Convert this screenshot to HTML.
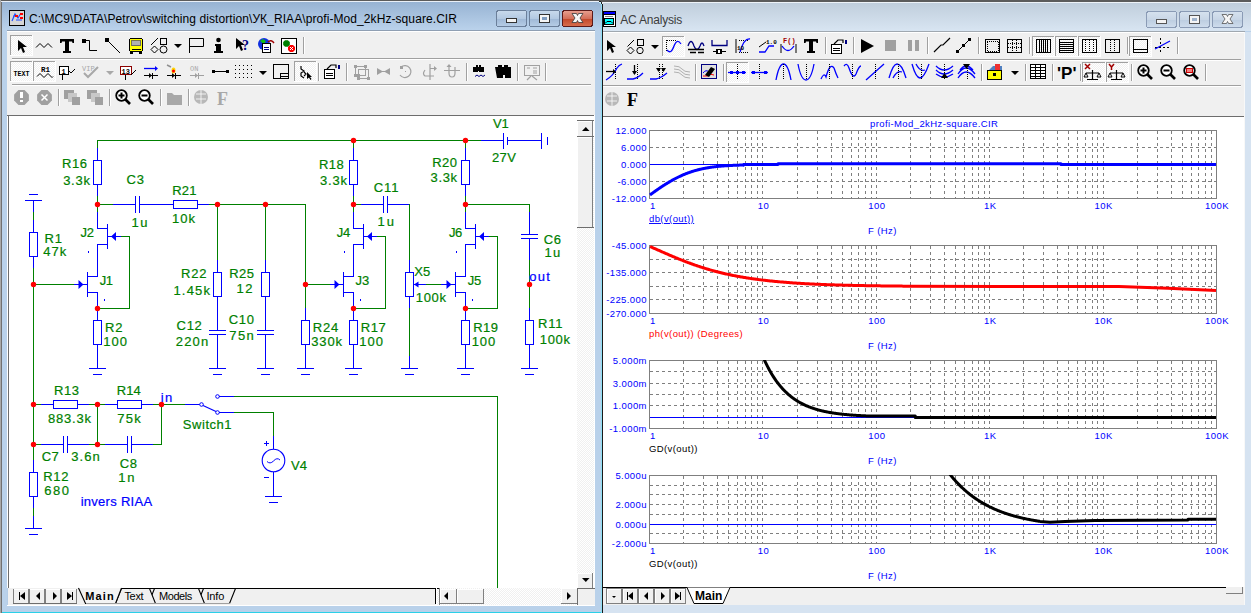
<!DOCTYPE html>
<html><head><meta charset="utf-8"><style>
html,body{margin:0;padding:0;width:1251px;height:613px;overflow:hidden;background:#fff}
svg{display:block}
svg{font-family:"Liberation Sans",sans-serif} rect{shape-rendering:crispEdges}
</style></head><body>
<svg width="1251" height="613" viewBox="0 0 1251 613">
<rect x="0" y="0" width="1251" height="613" fill="#b9d1ea"/>
<defs><linearGradient id="tact" x1="0" y1="0" x2="0" y2="1"><stop offset="0" stop-color="#97b3d3"/><stop offset="1" stop-color="#bad2eb"/></linearGradient><linearGradient id="tina" x1="0" y1="0" x2="0" y2="1"><stop offset="0" stop-color="#c0cedc"/><stop offset="1" stop-color="#d8e5f2"/></linearGradient><linearGradient id="fact" x1="0" y1="0" x2="0" y2="1"><stop offset="0" stop-color="#b9d1ea"/><stop offset="1" stop-color="#b9d1ea"/></linearGradient><linearGradient id="bclose" x1="0" y1="0" x2="0" y2="1"><stop offset="0" stop-color="#e8a192"/><stop offset="0.5" stop-color="#d46f5a"/><stop offset="0.52" stop-color="#c2472a"/><stop offset="1" stop-color="#d86f4f"/></linearGradient><linearGradient id="bact" x1="0" y1="0" x2="0" y2="1"><stop offset="0" stop-color="#c9daec"/><stop offset="0.5" stop-color="#b3c9e2"/><stop offset="0.52" stop-color="#9fb8d6"/><stop offset="1" stop-color="#b6cde6"/></linearGradient><linearGradient id="bina" x1="0" y1="0" x2="0" y2="1"><stop offset="0" stop-color="#d6e2ee"/><stop offset="0.5" stop-color="#c8d6e6"/><stop offset="0.52" stop-color="#bccde0"/><stop offset="1" stop-color="#cfdded"/></linearGradient><pattern id="dith" width="2" height="2" patternUnits="userSpaceOnUse"><rect width="2" height="2" fill="#f0f0f0"/><rect width="1" height="1" fill="#ffffff"/><rect x="1" y="1" width="1" height="1" fill="#ffffff"/></pattern></defs>
<rect x="0" y="0" width="602" height="613" fill="#b4cce6"/>
<rect x="0" y="0" width="1251" height="1" fill="#5c5c5c"/>
<rect x="0" y="0" width="1" height="613" fill="#6c6c6c"/>
<rect x="1" y="1" width="600" height="1" fill="#e9eff7"/>
<rect x="1" y="2" width="600" height="28" fill="url(#tact)"/>
<rect x="601" y="4" width="1" height="609" fill="#8fdff5"/>
<rect x="602" y="4" width="1" height="609" fill="#1a1a1a"/>
<rect x="603" y="0" width="648" height="2" fill="#5c5c5c"/>
<rect x="603" y="2" width="648" height="1" fill="#eef3f8"/>
<rect x="599" y="1" width="2" height="1" fill="#202020"/>
<rect x="601" y="2" width="1" height="2" fill="#202020"/>
<rect x="599" y="2" width="2" height="1" fill="#c8f0fa"/>
<rect x="600" y="3" width="1" height="1" fill="#b0e8f5"/>
<rect x="601" y="1" width="2" height="1" fill="#5c5c5c"/>
<rect x="602" y="2" width="1" height="2" fill="#e8eef5"/>
<rect x="603" y="3" width="648" height="28" fill="url(#tina)"/>
<rect x="603" y="32" width="648" height="581" fill="#d6e3f1"/>
<rect x="7" y="30" width="589" height="1" fill="#8f9fb3"/>
<rect x="7" y="31" width="589" height="1" fill="#ffffff"/>
<rect x="7" y="32" width="588" height="83" fill="#f0f0f0"/>
<rect x="12" y="58" width="579" height="1" fill="#a0a0a0"/>
<rect x="12" y="59" width="579" height="1" fill="#ffffff"/>
<rect x="12" y="84" width="579" height="1" fill="#a0a0a0"/>
<rect x="12" y="85" width="579" height="1" fill="#ffffff"/>
<rect x="7" y="115" width="588" height="473" fill="#ffffff"/>
<rect x="7" y="115" width="587" height="1" fill="#6d6d6d"/>
<rect x="8" y="115" width="1" height="474" fill="#6d6d6d"/>
<rect x="577" y="116" width="17" height="472" fill="#ffffff"/>
<rect x="577" y="137" width="17" height="436" fill="url(#dith)"/>
<rect x="577" y="121" width="16" height="16" fill="#f0f0f0"/>
<rect x="577" y="121" width="16" height="1" fill="#ffffff"/>
<rect x="577" y="121" width="1" height="16" fill="#ffffff"/>
<rect x="577" y="136" width="16" height="1" fill="#808080"/>
<rect x="592" y="121" width="1" height="16" fill="#808080"/>
<rect x="577" y="120" width="17" height="1" fill="#6d6d6d"/>
<rect x="577" y="136" width="17" height="1" fill="#6d6d6d"/>
<path d="M582 131 L589.5 131 L585.8 127 Z" fill="#000"/>
<rect x="577" y="137" width="16" height="91" fill="#f0f0f0"/>
<rect x="577" y="137" width="16" height="1" fill="#ffffff"/>
<rect x="577" y="137" width="1" height="91" fill="#ffffff"/>
<rect x="577" y="227" width="16" height="1" fill="#808080"/>
<rect x="592" y="137" width="1" height="91" fill="#808080"/>
<rect x="577" y="227" width="17" height="1" fill="#6d6d6d"/>
<rect x="577" y="573" width="16" height="16" fill="#f0f0f0"/>
<rect x="577" y="573" width="16" height="1" fill="#ffffff"/>
<rect x="577" y="573" width="1" height="16" fill="#ffffff"/>
<rect x="577" y="588" width="16" height="1" fill="#808080"/>
<rect x="592" y="573" width="1" height="16" fill="#808080"/>
<path d="M582 578 L589.5 578 L585.8 582 Z" fill="#000"/>
<rect x="8" y="588" width="587" height="17" fill="#f0f0f0"/>
<rect x="7" y="605" width="588" height="1" fill="#ffffff"/>
<rect x="13" y="589" width="16" height="15" fill="#f0f0f0"/>
<rect x="13" y="589" width="16" height="1" fill="#ffffff"/>
<rect x="13" y="589" width="1" height="15" fill="#ffffff"/>
<rect x="13" y="603" width="16" height="1" fill="#808080"/>
<rect x="28" y="589" width="1" height="15" fill="#808080"/>
<rect x="13" y="589" width="1" height="15" fill="#808080"/>
<rect x="13" y="603" width="16" height="1" fill="#6d6d6d"/>
<rect x="29" y="589" width="16" height="15" fill="#f0f0f0"/>
<rect x="29" y="589" width="16" height="1" fill="#ffffff"/>
<rect x="29" y="589" width="1" height="15" fill="#ffffff"/>
<rect x="29" y="603" width="16" height="1" fill="#808080"/>
<rect x="44" y="589" width="1" height="15" fill="#808080"/>
<rect x="29" y="589" width="1" height="15" fill="#808080"/>
<rect x="29" y="603" width="16" height="1" fill="#6d6d6d"/>
<rect x="45" y="589" width="16" height="15" fill="#f0f0f0"/>
<rect x="45" y="589" width="16" height="1" fill="#ffffff"/>
<rect x="45" y="589" width="1" height="15" fill="#ffffff"/>
<rect x="45" y="603" width="16" height="1" fill="#808080"/>
<rect x="60" y="589" width="1" height="15" fill="#808080"/>
<rect x="45" y="589" width="1" height="15" fill="#808080"/>
<rect x="45" y="603" width="16" height="1" fill="#6d6d6d"/>
<rect x="61" y="589" width="16" height="15" fill="#f0f0f0"/>
<rect x="61" y="589" width="16" height="1" fill="#ffffff"/>
<rect x="61" y="589" width="1" height="15" fill="#ffffff"/>
<rect x="61" y="603" width="16" height="1" fill="#808080"/>
<rect x="76" y="589" width="1" height="15" fill="#808080"/>
<rect x="61" y="589" width="1" height="15" fill="#808080"/>
<rect x="61" y="603" width="16" height="1" fill="#6d6d6d"/>
<path d="M19 592 h1 v8 h-1z M25 592 v8 l-5 -4z" fill="#000"/>
<path d="M40 592 v8 l-4 -4z" fill="#000"/>
<path d="M53 592 v8 l4 -4z" fill="#000"/>
<path d="M67 592 v8 l5 -4z M72 592 h1 v8 h-1z" fill="#000"/>
<rect x="121" y="588" width="315" height="1" fill="#000000"/>
<path d="M197.5 603.5 L203.5 588.5 L235.5 588.5 L229.5 603.5" fill="#f0f0f0" stroke="#000" stroke-width="1.1"/>
<path d="M148.5 603.5 L154.5 588.5 L198.5 588.5 L204.5 603.5" fill="#f0f0f0" stroke="#000" stroke-width="1.1"/>
<path d="M115.5 603.5 L121.5 588.5 L149.5 588.5 L155.5 603.5" fill="#f0f0f0" stroke="#000" stroke-width="1.1"/>
<path d="M78.5 588 L85.5 603.5 L115.5 603.5 L121.5 588" fill="#f4f4f4" stroke="#000" stroke-width="1.1"/>
<rect x="86" y="588" width="30" height="1" fill="#f4f4f4"/>
<rect x="86" y="603" width="144" height="1" fill="#a0a0a0"/>
<text x="85.28" y="599.5" font-size="11" fill="#000" text-anchor="start" font-weight="bold" letter-spacing="1.12">Main</text>
<text x="124.38" y="599.5" font-size="11" fill="#000" text-anchor="start" font-weight="normal" letter-spacing="-0.29">Text</text>
<text x="159.12" y="599.5" font-size="11" fill="#000" text-anchor="start" font-weight="normal" letter-spacing="-0.48">Models</text>
<text x="206.51" y="599.5" font-size="11" fill="#000" text-anchor="start" font-weight="normal" letter-spacing="-0.19">Info</text>
<rect x="436" y="588" width="141" height="17" fill="url(#dith)"/>
<rect x="436" y="588" width="4" height="1" fill="#000"/>
<rect x="435" y="588" width="1" height="16" fill="#000"/>
<rect x="436" y="588" width="1" height="16" fill="#ffffff"/>
<rect x="439" y="588" width="1" height="17" fill="#808080"/>
<rect x="440" y="589" width="17" height="15" fill="#f0f0f0"/>
<rect x="440" y="589" width="17" height="1" fill="#ffffff"/>
<rect x="440" y="589" width="1" height="15" fill="#ffffff"/>
<rect x="440" y="603" width="17" height="1" fill="#808080"/>
<rect x="456" y="589" width="1" height="15" fill="#808080"/>
<path d="M448 592 v8 l-4 -4z" fill="#000"/>
<rect x="457" y="589" width="27" height="15" fill="#f0f0f0"/>
<rect x="457" y="589" width="27" height="1" fill="#ffffff"/>
<rect x="457" y="589" width="1" height="15" fill="#ffffff"/>
<rect x="457" y="603" width="27" height="1" fill="#808080"/>
<rect x="483" y="589" width="1" height="15" fill="#808080"/>
<rect x="561" y="588" width="17" height="16" fill="#f0f0f0"/>
<rect x="561" y="588" width="17" height="1" fill="#ffffff"/>
<rect x="561" y="588" width="1" height="16" fill="#ffffff"/>
<rect x="561" y="603" width="17" height="1" fill="#808080"/>
<rect x="577" y="588" width="1" height="16" fill="#808080"/>
<path d="M567 592 v8 l4 -4z" fill="#000"/>
<rect x="578" y="589" width="16" height="16" fill="#f0f0f0"/>
<rect x="577" y="588" width="1" height="17" fill="#6d6d6d"/>
<rect x="577" y="588" width="18" height="1" fill="#6d6d6d"/>
<rect x="1" y="606" width="600" height="6" fill="#b9d1ea"/>
<rect x="0" y="612" width="601" height="1" fill="#2ad0e8"/>
<rect x="595" y="30" width="6" height="576" fill="#b9d1ea"/>
<rect x="1" y="30" width="6" height="576" fill="#b9d1ea"/>
<rect x="0" y="0" width="1" height="613" fill="#a8a8a8"/>
<rect x="1" y="2" width="1" height="611" fill="#707070"/>
<text x="28.9" y="23" font-size="12" fill="#000" text-anchor="start" font-weight="normal" letter-spacing="0.08">C:\MC9\DATA\Petrov\switching distortion\УК_RIAA\profi-Mod_2kHz-square.CIR</text>
<rect x="496.5" y="10.5" width="30" height="16" rx="2.5" fill="url(#bact)" stroke="#6b7f9a"/>
<rect x="529.5" y="10.5" width="30" height="16" rx="2.5" fill="url(#bact)" stroke="#6b7f9a"/>
<rect x="562.5" y="10.5" width="30" height="16" rx="2.5" fill="url(#bclose)" stroke="#5c1a1a"/>
<rect x="506.5" y="18.5" width="10" height="4" rx="1" fill="#f4f4f4" stroke="#333"/>
<rect x="539.5" y="14.5" width="10" height="8" rx="1" fill="#f4f4f4" stroke="#333"/><rect x="542" y="17" width="5" height="3" fill="#7f9cc0"/>
<path d="M572 13.5 L576.5 13.5 L577.5 15.5 L578.5 13.5 L583 13.5 L580 18 L583 22.5 L578.5 22.5 L577.5 20.5 L576.5 22.5 L572 22.5 L575 18 Z" fill="#f6f6f6" stroke="#3a3a3a" stroke-width="0.8"/>
<rect x="9.5" y="10.5" width="15" height="15" fill="#d6d6d6" stroke="#000"/>
<path d="M12 21 l3-7 l3 4 l3-5 M13 16h5 M16 20h6" stroke="#2050ff" stroke-width="1.2" fill="none"/><rect x="20" y="13" width="3" height="1.5" fill="#f00"/><rect x="20" y="17" width="3" height="1.5" fill="#f00"/><rect x="15" y="15" width="3" height="1.5" fill="#f00"/>
<rect x="603" y="32" width="642" height="84" fill="#f0f0f0"/>
<rect x="603" y="31" width="642" height="1" fill="#a0a8b0"/>
<rect x="603" y="32" width="642" height="1" fill="#ffffff"/>
<rect x="603" y="59" width="638" height="1" fill="#a0a0a0"/>
<rect x="603" y="60" width="638" height="1" fill="#ffffff"/>
<rect x="603" y="85" width="638" height="1" fill="#a0a0a0"/>
<rect x="603" y="86" width="638" height="1" fill="#ffffff"/>
<rect x="603" y="116" width="641" height="471" fill="#ffffff"/>
<rect x="603" y="116" width="641" height="1" fill="#6d6d6d"/>
<rect x="603" y="587" width="642" height="18" fill="#f0f0f0"/>
<rect x="603" y="587" width="623" height="1" fill="#000"/>
<rect x="1226" y="588" width="17" height="6" fill="#f0f0f0"/>
<rect x="1226" y="593" width="17" height="1" fill="#808080"/>
<rect x="1242" y="587" width="1" height="7" fill="#808080"/>
<rect x="603" y="605" width="648" height="8" fill="#d6e3f1"/>
<rect x="1245" y="32" width="6" height="573" fill="#d6e3f1"/>
<rect x="1244" y="32" width="1" height="573" fill="#f8f8f8"/>
<text x="620.3" y="24" font-size="12" fill="#3c3c3c" text-anchor="start" font-weight="normal" letter-spacing="-0.21">AC Analysis</text>
<rect x="1146.5" y="11.5" width="30" height="16" rx="2.5" fill="url(#bina)" stroke="#8a9bb5"/>
<rect x="1179.5" y="11.5" width="30" height="16" rx="2.5" fill="url(#bina)" stroke="#8a9bb5"/>
<rect x="1212.5" y="11.5" width="30" height="16" rx="2.5" fill="url(#bina)" stroke="#8a9bb5"/>
<rect x="1156.5" y="19.5" width="10" height="4" rx="1" fill="#f4f4f4" stroke="#555"/>
<rect x="1189.5" y="15.5" width="10" height="8" rx="1" fill="#f4f4f4" stroke="#555"/><rect x="1192" y="18" width="5" height="3" fill="#9fb3cc"/>
<path d="M1222 14.5 L1226.5 14.5 L1227.5 16.5 L1228.5 14.5 L1233 14.5 L1230 19 L1233 23.5 L1228.5 23.5 L1227.5 21.5 L1226.5 23.5 L1222 23.5 L1225 19 Z" fill="#f6f6f6" stroke="#555" stroke-width="0.8"/>
<rect x="603" y="11" width="13" height="16" fill="#000"/>
<rect x="604" y="12" width="11" height="2" fill="#0000ff"/>
<rect x="604" y="15" width="11" height="11" fill="#ffffff"/>
<rect x="605" y="16" width="8" height="1" fill="#808080"/>
<rect x="604" y="18" width="10" height="7" fill="#000"/>
<rect x="605" y="19" width="8" height="5" fill="#00ffff"/>
<path d="M605 23.5 L607 21.5 L611 21.5 L613 23.5" stroke="#000" stroke-width="1" fill="none"/>
<rect x="606" y="588" width="16" height="15" fill="#f0f0f0"/>
<rect x="606" y="588" width="16" height="1" fill="#808080"/>
<rect x="606" y="603" width="16" height="1" fill="#808080"/>
<rect x="606" y="588" width="1" height="16" fill="#808080"/>
<rect x="621" y="588" width="1" height="16" fill="#808080"/>
<rect x="607" y="589" width="14" height="1" fill="#ffffff"/>
<rect x="607" y="589" width="1" height="14" fill="#ffffff"/>
<rect x="622" y="588" width="16" height="15" fill="#f0f0f0"/>
<rect x="622" y="588" width="16" height="1" fill="#808080"/>
<rect x="622" y="603" width="16" height="1" fill="#808080"/>
<rect x="622" y="588" width="1" height="16" fill="#808080"/>
<rect x="637" y="588" width="1" height="16" fill="#808080"/>
<rect x="623" y="589" width="14" height="1" fill="#ffffff"/>
<rect x="623" y="589" width="1" height="14" fill="#ffffff"/>
<rect x="638" y="588" width="16" height="15" fill="#f0f0f0"/>
<rect x="638" y="588" width="16" height="1" fill="#808080"/>
<rect x="638" y="603" width="16" height="1" fill="#808080"/>
<rect x="638" y="588" width="1" height="16" fill="#808080"/>
<rect x="653" y="588" width="1" height="16" fill="#808080"/>
<rect x="639" y="589" width="14" height="1" fill="#ffffff"/>
<rect x="639" y="589" width="1" height="14" fill="#ffffff"/>
<rect x="654" y="588" width="16" height="15" fill="#f0f0f0"/>
<rect x="654" y="588" width="16" height="1" fill="#808080"/>
<rect x="654" y="603" width="16" height="1" fill="#808080"/>
<rect x="654" y="588" width="1" height="16" fill="#808080"/>
<rect x="669" y="588" width="1" height="16" fill="#808080"/>
<rect x="655" y="589" width="14" height="1" fill="#ffffff"/>
<rect x="655" y="589" width="1" height="14" fill="#ffffff"/>
<rect x="670" y="588" width="16" height="15" fill="#f0f0f0"/>
<rect x="670" y="588" width="16" height="1" fill="#808080"/>
<rect x="670" y="603" width="16" height="1" fill="#808080"/>
<rect x="670" y="588" width="1" height="16" fill="#808080"/>
<rect x="685" y="588" width="1" height="16" fill="#808080"/>
<rect x="671" y="589" width="14" height="1" fill="#ffffff"/>
<rect x="671" y="589" width="1" height="14" fill="#ffffff"/>
<path d="M612 596 h4 l-2 2z" fill="#000"/>
<path d="M627 592 h1 v8 h-1z M633 592 v8 l-5 -4z" fill="#000"/>
<path d="M648 592 v8 l-4 -4z" fill="#000"/>
<path d="M661 592 v8 l4 -4z" fill="#000"/>
<path d="M675 592 v8 l5 -4z M680 592 h1 v8 h-1z" fill="#000"/>
<path d="M687 587.5 L694 603.5 L723 603.5 L730 587.5" fill="#ffffff" stroke="#000" stroke-width="1"/>
<text x="695" y="600" font-size="12" fill="#000" text-anchor="start" font-weight="bold" >Main</text>
<rect x="97" y="140" width="385" height="1" fill="#008000"/>
<rect x="97" y="140" width="1" height="9" fill="#008000"/>
<rect x="353" y="140" width="1" height="9" fill="#008000"/>
<rect x="465" y="140" width="1" height="9" fill="#008000"/>
<rect x="97" y="148" width="1" height="13" fill="#0000ff"/>
<rect x="93" y="160" width="9" height="1" fill="#0000ff"/>
<rect x="93" y="184" width="9" height="1" fill="#0000ff"/>
<rect x="93" y="160" width="1" height="25" fill="#0000ff"/>
<rect x="101" y="160" width="1" height="25" fill="#0000ff"/>
<rect x="97" y="184" width="1" height="13" fill="#0000ff"/>
<rect x="97" y="196" width="1" height="17" fill="#008000"/>
<rect x="353" y="148" width="1" height="13" fill="#0000ff"/>
<rect x="349" y="160" width="9" height="1" fill="#0000ff"/>
<rect x="349" y="184" width="9" height="1" fill="#0000ff"/>
<rect x="349" y="160" width="1" height="25" fill="#0000ff"/>
<rect x="357" y="160" width="1" height="25" fill="#0000ff"/>
<rect x="353" y="184" width="1" height="13" fill="#0000ff"/>
<rect x="353" y="196" width="1" height="17" fill="#008000"/>
<rect x="465" y="148" width="1" height="13" fill="#0000ff"/>
<rect x="461" y="160" width="9" height="1" fill="#0000ff"/>
<rect x="461" y="184" width="9" height="1" fill="#0000ff"/>
<rect x="461" y="160" width="1" height="25" fill="#0000ff"/>
<rect x="469" y="160" width="1" height="25" fill="#0000ff"/>
<rect x="465" y="184" width="1" height="13" fill="#0000ff"/>
<rect x="465" y="196" width="1" height="17" fill="#008000"/>
<rect x="481" y="140" width="23" height="1" fill="#0000ff"/>
<rect x="503" y="133" width="1" height="16" fill="#0000ff"/>
<rect x="507" y="137" width="1" height="8" fill="#0000ff"/>
<rect x="507" y="140" width="35" height="1" fill="#0000ff"/>
<rect x="541" y="133" width="1" height="16" fill="#0000ff"/>
<rect x="547" y="137" width="1" height="8" fill="#0000ff"/>
<rect x="97" y="204" width="17" height="1" fill="#008000"/>
<rect x="113" y="204" width="23" height="1" fill="#0000ff"/>
<rect x="135" y="196" width="1" height="17" fill="#0000ff"/>
<rect x="139" y="196" width="1" height="17" fill="#0000ff"/>
<rect x="139" y="204" width="23" height="1" fill="#0000ff"/>
<rect x="161" y="204" width="13" height="1" fill="#0000ff"/>
<rect x="173" y="200" width="25" height="1" fill="#0000ff"/>
<rect x="173" y="208" width="25" height="1" fill="#0000ff"/>
<rect x="173" y="200" width="1" height="9" fill="#0000ff"/>
<rect x="197" y="200" width="1" height="9" fill="#0000ff"/>
<rect x="197" y="204" width="13" height="1" fill="#0000ff"/>
<rect x="209" y="204" width="97" height="1" fill="#008000"/>
<rect x="305" y="204" width="1" height="81" fill="#008000"/>
<rect x="353" y="204" width="9" height="1" fill="#008000"/>
<rect x="361" y="204" width="23" height="1" fill="#0000ff"/>
<rect x="383" y="196" width="1" height="17" fill="#0000ff"/>
<rect x="387" y="196" width="1" height="17" fill="#0000ff"/>
<rect x="387" y="204" width="23" height="1" fill="#0000ff"/>
<rect x="409" y="204" width="1" height="57" fill="#008000"/>
<rect x="465" y="204" width="65" height="1" fill="#008000"/>
<rect x="529" y="204" width="1" height="9" fill="#008000"/>
<rect x="529" y="212" width="1" height="23" fill="#0000ff"/>
<rect x="521" y="234" width="17" height="1" fill="#0000ff"/>
<rect x="521" y="238" width="17" height="1" fill="#0000ff"/>
<rect x="529" y="238" width="1" height="23" fill="#0000ff"/>
<rect x="529" y="260" width="1" height="49" fill="#008000"/>
<rect x="529" y="308" width="1" height="13" fill="#0000ff"/>
<rect x="525" y="320" width="9" height="1" fill="#0000ff"/>
<rect x="525" y="344" width="9" height="1" fill="#0000ff"/>
<rect x="525" y="320" width="1" height="25" fill="#0000ff"/>
<rect x="533" y="320" width="1" height="25" fill="#0000ff"/>
<rect x="529" y="344" width="1" height="13" fill="#0000ff"/>
<rect x="529" y="356" width="1" height="13" fill="#0000ff"/>
<rect x="521" y="368" width="17" height="1" fill="#0000ff"/>
<rect x="525" y="374" width="9" height="1" fill="#0000ff"/>
<rect x="217" y="204" width="1" height="57" fill="#008000"/>
<rect x="217" y="260" width="1" height="13" fill="#0000ff"/>
<rect x="213" y="272" width="9" height="1" fill="#0000ff"/>
<rect x="213" y="296" width="9" height="1" fill="#0000ff"/>
<rect x="213" y="272" width="1" height="25" fill="#0000ff"/>
<rect x="221" y="272" width="1" height="25" fill="#0000ff"/>
<rect x="217" y="296" width="1" height="13" fill="#0000ff"/>
<rect x="217" y="308" width="1" height="23" fill="#0000ff"/>
<rect x="209" y="330" width="17" height="1" fill="#0000ff"/>
<rect x="209" y="334" width="17" height="1" fill="#0000ff"/>
<rect x="217" y="334" width="1" height="23" fill="#0000ff"/>
<rect x="217" y="356" width="1" height="13" fill="#0000ff"/>
<rect x="209" y="368" width="17" height="1" fill="#0000ff"/>
<rect x="213" y="374" width="9" height="1" fill="#0000ff"/>
<rect x="265" y="204" width="1" height="57" fill="#008000"/>
<rect x="265" y="260" width="1" height="13" fill="#0000ff"/>
<rect x="261" y="272" width="9" height="1" fill="#0000ff"/>
<rect x="261" y="296" width="9" height="1" fill="#0000ff"/>
<rect x="261" y="272" width="1" height="25" fill="#0000ff"/>
<rect x="269" y="272" width="1" height="25" fill="#0000ff"/>
<rect x="265" y="296" width="1" height="13" fill="#0000ff"/>
<rect x="265" y="308" width="1" height="23" fill="#0000ff"/>
<rect x="257" y="330" width="17" height="1" fill="#0000ff"/>
<rect x="257" y="334" width="17" height="1" fill="#0000ff"/>
<rect x="265" y="334" width="1" height="23" fill="#0000ff"/>
<rect x="265" y="356" width="1" height="13" fill="#0000ff"/>
<rect x="257" y="368" width="17" height="1" fill="#0000ff"/>
<rect x="261" y="374" width="9" height="1" fill="#0000ff"/>
<rect x="305" y="284" width="1" height="25" fill="#008000"/>
<rect x="305" y="308" width="1" height="13" fill="#0000ff"/>
<rect x="301" y="320" width="9" height="1" fill="#0000ff"/>
<rect x="301" y="344" width="9" height="1" fill="#0000ff"/>
<rect x="301" y="320" width="1" height="25" fill="#0000ff"/>
<rect x="309" y="320" width="1" height="25" fill="#0000ff"/>
<rect x="305" y="344" width="1" height="13" fill="#0000ff"/>
<rect x="305" y="356" width="1" height="13" fill="#0000ff"/>
<rect x="297" y="368" width="17" height="1" fill="#0000ff"/>
<rect x="301" y="374" width="9" height="1" fill="#0000ff"/>
<rect x="409" y="260" width="1" height="13" fill="#0000ff"/>
<rect x="405" y="272" width="9" height="1" fill="#0000ff"/>
<rect x="405" y="296" width="9" height="1" fill="#0000ff"/>
<rect x="405" y="272" width="1" height="25" fill="#0000ff"/>
<rect x="413" y="272" width="1" height="25" fill="#0000ff"/>
<rect x="409" y="296" width="1" height="13" fill="#0000ff"/>
<rect x="409" y="308" width="1" height="49" fill="#008000"/>
<rect x="409" y="356" width="1" height="13" fill="#0000ff"/>
<rect x="401" y="368" width="17" height="1" fill="#0000ff"/>
<rect x="405" y="374" width="9" height="1" fill="#0000ff"/>
<path d="M414 284.5 L418.5 281.5 L418.5 287.5 Z" fill="#0000ff"/>
<rect x="413" y="284" width="14" height="1" fill="#0000ff"/>
<rect x="426" y="284" width="16" height="1" fill="#008000"/>
<rect x="97" y="212" width="1" height="17" fill="#0000ff"/>
<rect x="97" y="228" width="11" height="1" fill="#0000ff"/>
<rect x="107" y="224" width="1" height="25" fill="#0000ff"/>
<rect x="97" y="244" width="11" height="1" fill="#0000ff"/>
<rect x="97" y="244" width="1" height="33" fill="#0000ff"/>
<rect x="107" y="236" width="15" height="1" fill="#0000ff"/>
<path d="M111 236.5 L116 232 L116 241 Z" fill="#0000ff"/>
<rect x="87" y="276" width="11" height="1" fill="#0000ff"/>
<rect x="87" y="272" width="1" height="25" fill="#0000ff"/>
<rect x="87" y="292" width="11" height="1" fill="#0000ff"/>
<rect x="97" y="292" width="1" height="17" fill="#0000ff"/>
<rect x="73" y="284" width="15" height="1" fill="#0000ff"/>
<path d="M83.5 284.5 L78.5 280 L78.5 289 Z" fill="#0000ff"/>
<rect x="88" y="251" width="1" height="2" fill="#0000ff"/>
<rect x="104" y="299" width="1" height="2" fill="#0000ff"/>
<rect x="353" y="212" width="1" height="17" fill="#0000ff"/>
<rect x="353" y="228" width="11" height="1" fill="#0000ff"/>
<rect x="363" y="224" width="1" height="25" fill="#0000ff"/>
<rect x="353" y="244" width="11" height="1" fill="#0000ff"/>
<rect x="353" y="244" width="1" height="33" fill="#0000ff"/>
<rect x="363" y="236" width="15" height="1" fill="#0000ff"/>
<path d="M367 236.5 L372 232 L372 241 Z" fill="#0000ff"/>
<rect x="343" y="276" width="11" height="1" fill="#0000ff"/>
<rect x="343" y="272" width="1" height="25" fill="#0000ff"/>
<rect x="343" y="292" width="11" height="1" fill="#0000ff"/>
<rect x="353" y="292" width="1" height="17" fill="#0000ff"/>
<rect x="329" y="284" width="15" height="1" fill="#0000ff"/>
<path d="M339.5 284.5 L334.5 280 L334.5 289 Z" fill="#0000ff"/>
<rect x="344" y="251" width="1" height="2" fill="#0000ff"/>
<rect x="360" y="299" width="1" height="2" fill="#0000ff"/>
<rect x="465" y="212" width="1" height="17" fill="#0000ff"/>
<rect x="465" y="228" width="11" height="1" fill="#0000ff"/>
<rect x="475" y="224" width="1" height="25" fill="#0000ff"/>
<rect x="465" y="244" width="11" height="1" fill="#0000ff"/>
<rect x="465" y="244" width="1" height="33" fill="#0000ff"/>
<rect x="475" y="236" width="15" height="1" fill="#0000ff"/>
<path d="M479 236.5 L484 232 L484 241 Z" fill="#0000ff"/>
<rect x="455" y="276" width="11" height="1" fill="#0000ff"/>
<rect x="455" y="272" width="1" height="25" fill="#0000ff"/>
<rect x="455" y="292" width="11" height="1" fill="#0000ff"/>
<rect x="465" y="292" width="1" height="17" fill="#0000ff"/>
<rect x="441" y="284" width="15" height="1" fill="#0000ff"/>
<path d="M451.5 284.5 L446.5 280 L446.5 289 Z" fill="#0000ff"/>
<rect x="456" y="251" width="1" height="2" fill="#0000ff"/>
<rect x="472" y="299" width="1" height="2" fill="#0000ff"/>
<rect x="33" y="284" width="41" height="1" fill="#008000"/>
<rect x="121" y="236" width="9" height="1" fill="#008000"/>
<rect x="129" y="236" width="1" height="73" fill="#008000"/>
<rect x="97" y="308" width="33" height="1" fill="#008000"/>
<rect x="305" y="284" width="25" height="1" fill="#008000"/>
<rect x="377" y="236" width="9" height="1" fill="#008000"/>
<rect x="385" y="236" width="1" height="73" fill="#008000"/>
<rect x="353" y="308" width="33" height="1" fill="#008000"/>
<rect x="489" y="236" width="9" height="1" fill="#008000"/>
<rect x="497" y="236" width="1" height="73" fill="#008000"/>
<rect x="465" y="308" width="33" height="1" fill="#008000"/>
<rect x="97" y="308" width="1" height="13" fill="#0000ff"/>
<rect x="93" y="320" width="9" height="1" fill="#0000ff"/>
<rect x="93" y="344" width="9" height="1" fill="#0000ff"/>
<rect x="93" y="320" width="1" height="25" fill="#0000ff"/>
<rect x="101" y="320" width="1" height="25" fill="#0000ff"/>
<rect x="97" y="344" width="1" height="13" fill="#0000ff"/>
<rect x="97" y="356" width="1" height="13" fill="#0000ff"/>
<rect x="89" y="368" width="17" height="1" fill="#0000ff"/>
<rect x="93" y="374" width="9" height="1" fill="#0000ff"/>
<rect x="353" y="308" width="1" height="13" fill="#0000ff"/>
<rect x="349" y="320" width="9" height="1" fill="#0000ff"/>
<rect x="349" y="344" width="9" height="1" fill="#0000ff"/>
<rect x="349" y="320" width="1" height="25" fill="#0000ff"/>
<rect x="357" y="320" width="1" height="25" fill="#0000ff"/>
<rect x="353" y="344" width="1" height="13" fill="#0000ff"/>
<rect x="353" y="356" width="1" height="13" fill="#0000ff"/>
<rect x="345" y="368" width="17" height="1" fill="#0000ff"/>
<rect x="349" y="374" width="9" height="1" fill="#0000ff"/>
<rect x="465" y="308" width="1" height="13" fill="#0000ff"/>
<rect x="461" y="320" width="9" height="1" fill="#0000ff"/>
<rect x="461" y="344" width="9" height="1" fill="#0000ff"/>
<rect x="461" y="320" width="1" height="25" fill="#0000ff"/>
<rect x="469" y="320" width="1" height="25" fill="#0000ff"/>
<rect x="465" y="344" width="1" height="13" fill="#0000ff"/>
<rect x="465" y="356" width="1" height="13" fill="#0000ff"/>
<rect x="457" y="368" width="17" height="1" fill="#0000ff"/>
<rect x="461" y="374" width="9" height="1" fill="#0000ff"/>
<rect x="33" y="200" width="1" height="13" fill="#0000ff"/>
<rect x="25" y="200" width="17" height="1" fill="#0000ff"/>
<rect x="29" y="194" width="9" height="1" fill="#0000ff"/>
<rect x="33" y="212" width="1" height="9" fill="#008000"/>
<rect x="33" y="220" width="1" height="13" fill="#0000ff"/>
<rect x="29" y="232" width="9" height="1" fill="#0000ff"/>
<rect x="29" y="256" width="9" height="1" fill="#0000ff"/>
<rect x="29" y="232" width="1" height="25" fill="#0000ff"/>
<rect x="37" y="232" width="1" height="25" fill="#0000ff"/>
<rect x="33" y="256" width="1" height="13" fill="#0000ff"/>
<rect x="33" y="268" width="1" height="193" fill="#008000"/>
<rect x="33" y="460" width="1" height="13" fill="#0000ff"/>
<rect x="29" y="472" width="9" height="1" fill="#0000ff"/>
<rect x="29" y="496" width="9" height="1" fill="#0000ff"/>
<rect x="29" y="472" width="1" height="25" fill="#0000ff"/>
<rect x="37" y="472" width="1" height="25" fill="#0000ff"/>
<rect x="33" y="496" width="1" height="13" fill="#0000ff"/>
<rect x="33" y="508" width="1" height="9" fill="#008000"/>
<rect x="33" y="516" width="1" height="13" fill="#0000ff"/>
<rect x="25" y="528" width="17" height="1" fill="#0000ff"/>
<rect x="29" y="534" width="9" height="1" fill="#0000ff"/>
<rect x="33" y="404" width="9" height="1" fill="#008000"/>
<rect x="41" y="404" width="13" height="1" fill="#0000ff"/>
<rect x="53" y="400" width="25" height="1" fill="#0000ff"/>
<rect x="53" y="408" width="25" height="1" fill="#0000ff"/>
<rect x="53" y="400" width="1" height="9" fill="#0000ff"/>
<rect x="77" y="400" width="1" height="9" fill="#0000ff"/>
<rect x="77" y="404" width="13" height="1" fill="#0000ff"/>
<rect x="89" y="404" width="17" height="1" fill="#008000"/>
<rect x="105" y="404" width="13" height="1" fill="#0000ff"/>
<rect x="117" y="400" width="25" height="1" fill="#0000ff"/>
<rect x="117" y="408" width="25" height="1" fill="#0000ff"/>
<rect x="117" y="400" width="1" height="9" fill="#0000ff"/>
<rect x="141" y="400" width="1" height="9" fill="#0000ff"/>
<rect x="141" y="404" width="13" height="1" fill="#0000ff"/>
<rect x="153" y="404" width="33" height="1" fill="#008000"/>
<rect x="33" y="444" width="9" height="1" fill="#008000"/>
<rect x="41" y="444" width="23" height="1" fill="#0000ff"/>
<rect x="63" y="436" width="1" height="17" fill="#0000ff"/>
<rect x="67" y="436" width="1" height="17" fill="#0000ff"/>
<rect x="67" y="444" width="23" height="1" fill="#0000ff"/>
<rect x="89" y="444" width="17" height="1" fill="#008000"/>
<rect x="105" y="444" width="23" height="1" fill="#0000ff"/>
<rect x="127" y="436" width="1" height="17" fill="#0000ff"/>
<rect x="131" y="436" width="1" height="17" fill="#0000ff"/>
<rect x="131" y="444" width="23" height="1" fill="#0000ff"/>
<rect x="153" y="444" width="9" height="1" fill="#008000"/>
<rect x="97" y="404" width="1" height="41" fill="#008000"/>
<rect x="161" y="404" width="1" height="41" fill="#008000"/>
<rect x="185" y="404" width="15" height="1" fill="#0000ff"/>
<circle cx="201.5" cy="404.5" r="1.8" fill="#fff" stroke="#0000ff" stroke-width="1"/>
<circle cx="217.5" cy="396.5" r="1.8" fill="#fff" stroke="#0000ff" stroke-width="1"/>
<circle cx="217.5" cy="412.5" r="1.8" fill="#fff" stroke="#0000ff" stroke-width="1"/>
<path d="M203 405.5 L216 411.5" stroke="#0000ff" stroke-width="1.2" fill="none"/>
<rect x="219" y="396" width="16" height="1" fill="#0000ff"/>
<rect x="234" y="396" width="264" height="1" fill="#008000"/>
<rect x="497" y="396" width="1" height="192" fill="#008000"/>
<rect x="219" y="412" width="16" height="1" fill="#0000ff"/>
<rect x="234" y="412" width="40" height="1" fill="#008000"/>
<rect x="273" y="412" width="1" height="25" fill="#008000"/>
<rect x="273" y="436" width="1" height="13" fill="#0000ff"/>
<circle cx="273.5" cy="460.5" r="11.3" fill="none" stroke="#0000ff" stroke-width="1.1"/>
<path d="M267 461.5 Q270 464.5 273.5 461 Q277 457 280 460" fill="none" stroke="#0000ff" stroke-width="1"/>
<rect x="273" y="472" width="1" height="13" fill="#0000ff"/>
<rect x="273" y="484" width="1" height="13" fill="#0000ff"/>
<rect x="265" y="496" width="17" height="1" fill="#0000ff"/>
<rect x="269" y="502" width="9" height="1" fill="#0000ff"/>
<rect x="264" y="443" width="5" height="1" fill="#0000ff"/>
<rect x="266" y="441" width="1" height="5" fill="#0000ff"/>
<rect x="264" y="477" width="5" height="1" fill="#0000ff"/>
<circle cx="97.5" cy="204.5" r="2.7" fill="#ff0000"/>
<circle cx="217.5" cy="204.5" r="2.7" fill="#ff0000"/>
<circle cx="265.5" cy="204.5" r="2.7" fill="#ff0000"/>
<circle cx="353.5" cy="140.5" r="2.7" fill="#ff0000"/>
<circle cx="465.5" cy="140.5" r="2.7" fill="#ff0000"/>
<circle cx="353.5" cy="204.5" r="2.7" fill="#ff0000"/>
<circle cx="465.5" cy="204.5" r="2.7" fill="#ff0000"/>
<circle cx="33.5" cy="284.5" r="2.7" fill="#ff0000"/>
<circle cx="305.5" cy="284.5" r="2.7" fill="#ff0000"/>
<circle cx="529.5" cy="284.5" r="2.7" fill="#ff0000"/>
<circle cx="97.5" cy="308.5" r="2.7" fill="#ff0000"/>
<circle cx="353.5" cy="308.5" r="2.7" fill="#ff0000"/>
<circle cx="465.5" cy="308.5" r="2.7" fill="#ff0000"/>
<circle cx="33.5" cy="404.5" r="2.7" fill="#ff0000"/>
<circle cx="97.5" cy="404.5" r="2.7" fill="#ff0000"/>
<circle cx="161.5" cy="404.5" r="2.7" fill="#ff0000"/>
<circle cx="33.5" cy="444.5" r="2.7" fill="#ff0000"/>
<circle cx="97.5" cy="444.5" r="2.7" fill="#ff0000"/>
<text x="61.96" y="168" font-size="13" fill="#008000" text-anchor="start" font-weight="normal" letter-spacing="0.65" stroke="#008000" stroke-width="0.2">R16</text>
<text x="63.14" y="185.2" font-size="13" fill="#008000" text-anchor="start" font-weight="normal" letter-spacing="0.73" stroke="#008000" stroke-width="0.2">3.3k</text>
<text x="126.55" y="184" font-size="13" fill="#008000" text-anchor="start" font-weight="normal" letter-spacing="0.80" stroke="#008000" stroke-width="0.2">C3</text>
<text x="131.43" y="226.6" font-size="13" fill="#008000" text-anchor="start" font-weight="normal" letter-spacing="1.59" stroke="#008000" stroke-width="0.2">1u</text>
<text x="172.16" y="195" font-size="13" fill="#008000" text-anchor="start" font-weight="normal" letter-spacing="0.29" stroke="#008000" stroke-width="0.2">R21</text>
<text x="172.02" y="222.5" font-size="13" fill="#008000" text-anchor="start" font-weight="normal" letter-spacing="1.02" stroke="#008000" stroke-width="0.2">10k</text>
<text x="44.56" y="242.7" font-size="13" fill="#008000" text-anchor="start" font-weight="normal" letter-spacing="0.85" stroke="#008000" stroke-width="0.2">R1</text>
<text x="43.14" y="256.3" font-size="13" fill="#008000" text-anchor="start" font-weight="normal" letter-spacing="1.12" stroke="#008000" stroke-width="0.2">47k</text>
<text x="80.6" y="236.9" font-size="13" fill="#008000" text-anchor="start" font-weight="normal" letter-spacing="-0.27" stroke="#008000" stroke-width="0.2">J2</text>
<text x="99.8" y="284.8" font-size="13" fill="#008000" text-anchor="start" font-weight="normal" letter-spacing="-0.53" stroke="#008000" stroke-width="0.2">J1</text>
<text x="180.96" y="277.5" font-size="13" fill="#008000" text-anchor="start" font-weight="normal" letter-spacing="0.82" stroke="#008000" stroke-width="0.2">R22</text>
<text x="173.42" y="295" font-size="13" fill="#008000" text-anchor="start" font-weight="normal" letter-spacing="1.20" stroke="#008000" stroke-width="0.2">1.45k</text>
<text x="229.16" y="277.5" font-size="13" fill="#008000" text-anchor="start" font-weight="normal" letter-spacing="0.50" stroke="#008000" stroke-width="0.2">R25</text>
<text x="236.52" y="293" font-size="13" fill="#008000" text-anchor="start" font-weight="normal" letter-spacing="1.60" stroke="#008000" stroke-width="0.2">12</text>
<text x="176.55" y="329.6" font-size="13" fill="#008000" text-anchor="start" font-weight="normal" letter-spacing="0.72" stroke="#008000" stroke-width="0.2">C12</text>
<text x="175.75" y="345.5" font-size="13" fill="#008000" text-anchor="start" font-weight="normal" letter-spacing="1.17" stroke="#008000" stroke-width="0.2">220n</text>
<text x="228.75" y="323.8" font-size="13" fill="#008000" text-anchor="start" font-weight="normal" letter-spacing="0.67" stroke="#008000" stroke-width="0.2">C10</text>
<text x="229.25" y="340" font-size="13" fill="#008000" text-anchor="start" font-weight="normal" letter-spacing="1.44" stroke="#008000" stroke-width="0.2">75n</text>
<text x="104.96" y="331.6" font-size="13" fill="#008000" text-anchor="start" font-weight="normal" letter-spacing="0.82" stroke="#008000" stroke-width="0.2">R2</text>
<text x="103.32" y="345.5" font-size="13" fill="#008000" text-anchor="start" font-weight="normal" letter-spacing="1.04" stroke="#008000" stroke-width="0.2">100</text>
<text x="312.86" y="331.6" font-size="13" fill="#008000" text-anchor="start" font-weight="normal" letter-spacing="0.71" stroke="#008000" stroke-width="0.2">R24</text>
<text x="311.24" y="345.5" font-size="13" fill="#008000" text-anchor="start" font-weight="normal" letter-spacing="0.85" stroke="#008000" stroke-width="0.2">330k</text>
<text x="360.76" y="331.6" font-size="13" fill="#008000" text-anchor="start" font-weight="normal" letter-spacing="0.62" stroke="#008000" stroke-width="0.2">R17</text>
<text x="359.22" y="345.5" font-size="13" fill="#008000" text-anchor="start" font-weight="normal" letter-spacing="0.99" stroke="#008000" stroke-width="0.2">100</text>
<text x="318.96" y="168.7" font-size="13" fill="#008000" text-anchor="start" font-weight="normal" letter-spacing="0.50" stroke="#008000" stroke-width="0.2">R18</text>
<text x="320.04" y="184.7" font-size="13" fill="#008000" text-anchor="start" font-weight="normal" letter-spacing="0.79" stroke="#008000" stroke-width="0.2">3.3k</text>
<text x="373.65" y="191.6" font-size="13" fill="#008000" text-anchor="start" font-weight="normal" letter-spacing="1.03" stroke="#008000" stroke-width="0.2">C11</text>
<text x="377.62" y="226.4" font-size="13" fill="#008000" text-anchor="start" font-weight="normal" letter-spacing="1.79" stroke="#008000" stroke-width="0.2">1u</text>
<text x="432.26" y="166.6" font-size="13" fill="#008000" text-anchor="start" font-weight="normal" letter-spacing="0.42" stroke="#008000" stroke-width="0.2">R20</text>
<text x="430.54" y="181.8" font-size="13" fill="#008000" text-anchor="start" font-weight="normal" letter-spacing="0.63" stroke="#008000" stroke-width="0.2">3.3k</text>
<text x="492.94" y="127.5" font-size="13" fill="#008000" text-anchor="start" font-weight="normal" letter-spacing="-0.21" stroke="#008000" stroke-width="0.2">V1</text>
<text x="492.05" y="161.9" font-size="13" fill="#008000" text-anchor="start" font-weight="normal" letter-spacing="0.34" stroke="#008000" stroke-width="0.2">27V</text>
<text x="336.8" y="236.7" font-size="13" fill="#008000" text-anchor="start" font-weight="normal" letter-spacing="-0.39" stroke="#008000" stroke-width="0.2">J4</text>
<text x="355.6" y="284.8" font-size="13" fill="#008000" text-anchor="start" font-weight="normal" letter-spacing="0.00" stroke="#008000" stroke-width="0.2">J3</text>
<text x="449.1" y="236.7" font-size="13" fill="#008000" text-anchor="start" font-weight="normal" letter-spacing="-0.70" stroke="#008000" stroke-width="0.2">J6</text>
<text x="467.8" y="284.8" font-size="13" fill="#008000" text-anchor="start" font-weight="normal" letter-spacing="-0.20" stroke="#008000" stroke-width="0.2">J5</text>
<text x="414.28" y="275.5" font-size="13" fill="#008000" text-anchor="start" font-weight="normal" letter-spacing="0.18" stroke="#008000" stroke-width="0.2">X5</text>
<text x="415.72" y="302" font-size="13" fill="#008000" text-anchor="start" font-weight="normal" letter-spacing="0.69" stroke="#008000" stroke-width="0.2">100k</text>
<text x="543.75" y="244.4" font-size="13" fill="#008000" text-anchor="start" font-weight="normal" letter-spacing="0.49" stroke="#008000" stroke-width="0.2">C6</text>
<text x="544.62" y="257.4" font-size="13" fill="#008000" text-anchor="start" font-weight="normal" letter-spacing="1.19" stroke="#008000" stroke-width="0.2">1u</text>
<text x="529.28" y="281.2" font-size="13" fill="#0000ff" text-anchor="start" font-weight="normal" letter-spacing="1.24" stroke="#0000ff" stroke-width="0.2">out</text>
<text x="473.26" y="331.6" font-size="13" fill="#008000" text-anchor="start" font-weight="normal" letter-spacing="0.48" stroke="#008000" stroke-width="0.2">R19</text>
<text x="471.72" y="345.5" font-size="13" fill="#008000" text-anchor="start" font-weight="normal" letter-spacing="0.89" stroke="#008000" stroke-width="0.2">100</text>
<text x="537.96" y="327.5" font-size="13" fill="#008000" text-anchor="start" font-weight="normal" letter-spacing="0.87" stroke="#008000" stroke-width="0.2">R11</text>
<text x="539.72" y="344.3" font-size="13" fill="#008000" text-anchor="start" font-weight="normal" letter-spacing="0.69" stroke="#008000" stroke-width="0.2">100k</text>
<text x="53.96" y="394.9" font-size="13" fill="#008000" text-anchor="start" font-weight="normal" letter-spacing="0.60" stroke="#008000" stroke-width="0.2">R13</text>
<text x="47.88" y="422.8" font-size="13" fill="#008000" text-anchor="start" font-weight="normal" letter-spacing="0.81" stroke="#008000" stroke-width="0.2">883.3k</text>
<text x="116.66" y="394.7" font-size="13" fill="#008000" text-anchor="start" font-weight="normal" letter-spacing="0.15" stroke="#008000" stroke-width="0.2">R14</text>
<text x="117.35" y="422.7" font-size="13" fill="#008000" text-anchor="start" font-weight="normal" letter-spacing="1.26" stroke="#008000" stroke-width="0.2">75k</text>
<text x="160.85" y="401.5" font-size="13" fill="#0000ff" text-anchor="start" font-weight="normal" letter-spacing="1.35" stroke="#0000ff" stroke-width="0.2">in</text>
<text x="182.82" y="429.4" font-size="13" fill="#008000" text-anchor="start" font-weight="normal" letter-spacing="0.54" stroke="#008000" stroke-width="0.2">Switch1</text>
<text x="290.94" y="469.7" font-size="13" fill="#008000" text-anchor="start" font-weight="normal" letter-spacing="0.13" stroke="#008000" stroke-width="0.2">V4</text>
<text x="41.65" y="460.7" font-size="13" fill="#008000" text-anchor="start" font-weight="normal" letter-spacing="0.53" stroke="#008000" stroke-width="0.2">C7</text>
<text x="71.24" y="460.7" font-size="13" fill="#008000" text-anchor="start" font-weight="normal" letter-spacing="1.05" stroke="#008000" stroke-width="0.2">3.6n</text>
<text x="119.75" y="468.1" font-size="13" fill="#008000" text-anchor="start" font-weight="normal" letter-spacing="0.60" stroke="#008000" stroke-width="0.2">C8</text>
<text x="118.32" y="481.5" font-size="13" fill="#008000" text-anchor="start" font-weight="normal" letter-spacing="1.72" stroke="#008000" stroke-width="0.2">1n</text>
<text x="43.26" y="480.7" font-size="13" fill="#008000" text-anchor="start" font-weight="normal" letter-spacing="0.72" stroke="#008000" stroke-width="0.2">R12</text>
<text x="44.35" y="494.6" font-size="13" fill="#008000" text-anchor="start" font-weight="normal" letter-spacing="1.43" stroke="#008000" stroke-width="0.2">680</text>
<text x="80.66" y="505.7" font-size="13" fill="#0000ff" text-anchor="start" font-weight="normal" letter-spacing="0.28" stroke="#0000ff" stroke-width="0.2">invers RIAA</text>
<path d="M683.5 131V198M703.5 131V198M717.5 131V198M728.5 131V198M737.5 131V198M745.5 131V198M751.5 131V198M757.5 131V198M762.5 131V198M797.5 131V198M817.5 131V198M831.5 131V198M842.5 131V198M851.5 131V198M858.5 131V198M865.5 131V198M871.5 131V198M876.5 131V198M910.5 131V198M930.5 131V198M944.5 131V198M955.5 131V198M964.5 131V198M972.5 131V198M978.5 131V198M984.5 131V198M989.5 131V198M1023.5 131V198M1043.5 131V198M1057.5 131V198M1068.5 131V198M1077.5 131V198M1085.5 131V198M1092.5 131V198M1097.5 131V198M1103.5 131V198M1137.5 131V198M1157.5 131V198M1171.5 131V198M1182.5 131V198M1191.5 131V198M1198.5 131V198M1205.5 131V198M1211.5 131V198M650 147.5H1216M650 181.5H1216" stroke="#7f7f7f" stroke-width="1" stroke-dasharray="3 3" fill="none" shape-rendering="crispEdges"/>
<rect x="649" y="164" width="568" height="1" fill="#0000ff"/>
<rect x="649" y="130" width="568" height="1" fill="#7f7f7f"/>
<rect x="649" y="198" width="568" height="1" fill="#7f7f7f"/>
<rect x="649" y="130" width="1" height="69" fill="#7f7f7f"/>
<rect x="1216" y="130" width="1" height="69" fill="#7f7f7f"/>
<text x="646.9" y="134" font-size="9.5" fill="#0000ff" text-anchor="end" font-weight="normal" letter-spacing="0.4">12.000</text>
<text x="646.9" y="151" font-size="9.5" fill="#0000ff" text-anchor="end" font-weight="normal" letter-spacing="0.4">6.000</text>
<text x="646.9" y="167.5" font-size="9.5" fill="#0000ff" text-anchor="end" font-weight="normal" letter-spacing="0.4">0.000</text>
<text x="646.9" y="184.5" font-size="9.5" fill="#0000ff" text-anchor="end" font-weight="normal" letter-spacing="0.4">-6.000</text>
<text x="646.9" y="201.5" font-size="9.5" fill="#0000ff" text-anchor="end" font-weight="normal" letter-spacing="0.4">-12.000</text>
<text x="650" y="209" font-size="9.5" fill="#0000ff" text-anchor="start" font-weight="normal" letter-spacing="0.4">1</text>
<text x="763.4" y="209" font-size="9.5" fill="#0000ff" text-anchor="middle" font-weight="normal" letter-spacing="0.4">10</text>
<text x="876.8" y="209" font-size="9.5" fill="#0000ff" text-anchor="middle" font-weight="normal" letter-spacing="0.4">100</text>
<text x="990.2" y="209" font-size="9.5" fill="#0000ff" text-anchor="middle" font-weight="normal" letter-spacing="0.4">1K</text>
<text x="1103.6" y="209" font-size="9.5" fill="#0000ff" text-anchor="middle" font-weight="normal" letter-spacing="0.4">10K</text>
<text x="1217.0" y="209" font-size="9.5" fill="#0000ff" text-anchor="middle" font-weight="normal" letter-spacing="0.4">100K</text>
<text x="868" y="234" font-size="9.5" fill="#0000ff" text-anchor="start" font-weight="normal" letter-spacing="0.4">F (Hz)</text>
<text x="649" y="222" font-size="9.5" fill="#0000ff" text-anchor="start" font-weight="normal" text-decoration="underline" letter-spacing="0.4">db(v(out))</text>
<text x="870" y="127" font-size="9.5" fill="#0000ff" text-anchor="start" font-weight="normal" letter-spacing="0.4">profi-Mod_2kHz-square.CIR</text>
<clipPath id="pc1"><rect x="649" y="130" width="568" height="69"/></clipPath>
<g clip-path="url(#pc1)">
<polyline points="650.0,194.93 650.5,194.56 651.0,194.19 651.5,193.82 652.0,193.46 652.5,193.10 653.0,192.74 653.5,192.38 654.0,192.02 654.5,191.66 655.0,191.30 655.5,190.95 656.0,190.60 656.5,190.25 657.0,189.90 657.5,189.55 658.0,189.21 658.5,188.86 659.0,188.52 659.5,188.18 660.0,187.84 660.5,187.51 661.0,187.17 661.5,186.84 662.0,186.51 662.5,186.18 663.0,185.86 663.5,185.54 664.0,185.21 664.5,184.90 665.0,184.58 665.5,184.26 666.0,183.95 666.5,183.64 667.0,183.34 667.5,183.03 668.0,182.73 668.5,182.43 669.0,182.13 669.5,181.84 670.0,181.54 670.5,181.25 671.0,180.97 671.5,180.68 672.0,180.40 672.5,180.12 673.0,179.85 673.5,179.57 674.0,179.30 674.5,179.04 675.0,178.77 675.5,178.51 676.0,178.25 676.5,177.99 677.0,177.74 677.5,177.49 678.0,177.24 678.5,177.00 679.0,176.76 679.5,176.52 680.0,176.28 680.5,176.05 681.0,175.82 681.5,175.60 682.0,175.37 682.5,175.15 683.0,174.94 683.5,174.72 684.0,174.51 684.5,174.30 685.0,174.10 685.5,173.90 686.0,173.70 686.5,173.50 687.0,173.31 687.5,173.12 688.0,172.93 688.5,172.75 689.0,172.57 689.5,172.39 690.0,172.22 690.5,172.05 691.0,171.88 691.5,171.71 692.0,171.55 692.5,171.39 693.0,171.23 693.5,171.08 694.0,170.93 694.5,170.78 695.0,170.63 695.5,170.49 696.0,170.35 696.5,170.21 697.0,170.08 697.5,169.95 698.0,169.82 698.5,169.69 699.0,169.56 699.5,169.44 700.0,169.32 700.5,169.21 701.0,169.09 701.5,168.98 702.0,168.87 702.5,168.76 703.0,168.66 703.5,168.56 704.0,168.46 704.5,168.36 705.0,168.26 705.5,168.17 706.0,168.08 706.5,167.99 707.0,167.90 707.5,167.81 708.0,167.73 708.5,167.65 709.0,167.57 709.5,167.49 710.0,167.41 710.5,167.34 711.0,167.27 711.5,167.20 712.0,167.13 712.5,167.06 713.0,166.99 713.5,166.93 714.0,166.87 714.5,166.81 715.0,166.75 715.5,166.69 716.0,166.63 716.5,166.58 717.0,166.52 717.5,166.47 718.0,166.42 718.5,166.37 719.0,166.32 719.5,166.27 720.0,166.23 720.5,166.18 721.0,166.14 721.5,166.10 722.0,166.05 722.5,166.01 723.0,165.97 723.5,165.94 724.0,165.90 724.5,165.86 725.0,165.83 725.5,165.79 726.0,165.76 726.5,165.73 727.0,165.69 727.5,165.66 728.0,165.63 728.5,165.60 729.0,165.57 729.5,165.55 730.0,165.52 730.5,165.49 731.0,165.47 731.5,165.44 732.0,165.42 732.5,165.39 733.0,165.37 733.5,165.35 734.0,165.33 734.5,165.31 735.0,165.29 735.5,165.27 736.0,165.25 736.5,165.23 737.0,165.21 737.5,165.19 738.0,165.17 738.5,165.16 739.0,165.14 739.5,165.12 740.0,165.11 740.5,165.09 741.0,165.08 741.5,165.06 742.0,165.05 742.5,165.04 743.0,165.02 743.4,165.20 743.4,164.60 778.0,164.50 778.0,163.70 1061.0,163.70 1061.0,164.50 1216.0,164.50" fill="none" stroke="#0000ff" stroke-width="3" stroke-linejoin="round"/>
</g>
<path d="M683.5 246V313M703.5 246V313M717.5 246V313M728.5 246V313M737.5 246V313M745.5 246V313M751.5 246V313M757.5 246V313M762.5 246V313M797.5 246V313M817.5 246V313M831.5 246V313M842.5 246V313M851.5 246V313M858.5 246V313M865.5 246V313M871.5 246V313M876.5 246V313M910.5 246V313M930.5 246V313M944.5 246V313M955.5 246V313M964.5 246V313M972.5 246V313M978.5 246V313M984.5 246V313M989.5 246V313M1023.5 246V313M1043.5 246V313M1057.5 246V313M1068.5 246V313M1077.5 246V313M1085.5 246V313M1092.5 246V313M1097.5 246V313M1103.5 246V313M1137.5 246V313M1157.5 246V313M1171.5 246V313M1182.5 246V313M1191.5 246V313M1198.5 246V313M1205.5 246V313M1211.5 246V313M650 259.5H1216M650 272.5H1216M650 286.5H1216M650 299.5H1216" stroke="#7f7f7f" stroke-width="1" stroke-dasharray="3 3" fill="none" shape-rendering="crispEdges"/>
<rect x="649" y="245" width="568" height="1" fill="#7f7f7f"/>
<rect x="649" y="313" width="568" height="1" fill="#7f7f7f"/>
<rect x="649" y="245" width="1" height="69" fill="#7f7f7f"/>
<rect x="1216" y="245" width="1" height="69" fill="#7f7f7f"/>
<text x="646.9" y="248.7" font-size="9.5" fill="#0000ff" text-anchor="end" font-weight="normal" letter-spacing="0.4">-45.000</text>
<text x="646.9" y="275.6" font-size="9.5" fill="#0000ff" text-anchor="end" font-weight="normal" letter-spacing="0.4">-135.000</text>
<text x="646.9" y="302.5" font-size="9.5" fill="#0000ff" text-anchor="end" font-weight="normal" letter-spacing="0.4">-225.000</text>
<text x="646.9" y="317" font-size="9.5" fill="#0000ff" text-anchor="end" font-weight="normal" letter-spacing="0.4">-270.000</text>
<text x="650" y="324" font-size="9.5" fill="#0000ff" text-anchor="start" font-weight="normal" letter-spacing="0.4">1</text>
<text x="763.4" y="324" font-size="9.5" fill="#0000ff" text-anchor="middle" font-weight="normal" letter-spacing="0.4">10</text>
<text x="876.8" y="324" font-size="9.5" fill="#0000ff" text-anchor="middle" font-weight="normal" letter-spacing="0.4">100</text>
<text x="990.2" y="324" font-size="9.5" fill="#0000ff" text-anchor="middle" font-weight="normal" letter-spacing="0.4">1K</text>
<text x="1103.6" y="324" font-size="9.5" fill="#0000ff" text-anchor="middle" font-weight="normal" letter-spacing="0.4">10K</text>
<text x="1217.0" y="324" font-size="9.5" fill="#0000ff" text-anchor="middle" font-weight="normal" letter-spacing="0.4">100K</text>
<text x="868" y="349" font-size="9.5" fill="#0000ff" text-anchor="start" font-weight="normal" letter-spacing="0.4">F (Hz)</text>
<text x="649" y="337" font-size="9.5" fill="#ff0000" text-anchor="start" font-weight="normal"  letter-spacing="0.4">ph(v(out)) (Degrees)</text>
<clipPath id="pc2"><rect x="649" y="245" width="568" height="69"/></clipPath>
<g clip-path="url(#pc2)">
<polyline points="650.0,246.54 651.0,246.98 652.0,247.42 653.0,247.86 654.0,248.29 655.0,248.73 656.0,249.17 657.0,249.61 658.0,250.05 659.0,250.49 660.0,250.93 661.0,251.37 662.0,251.81 663.0,252.25 664.0,252.69 665.0,253.12 666.0,253.56 667.0,253.99 668.0,254.42 669.0,254.85 670.0,255.28 671.0,255.70 672.0,256.13 673.0,256.55 674.0,256.97 675.0,257.39 676.0,257.80 677.0,258.21 678.0,258.62 679.0,259.03 680.0,259.43 681.0,259.83 682.0,260.23 683.0,260.62 684.0,261.01 685.0,261.40 686.0,261.78 687.0,262.16 688.0,262.54 689.0,262.91 690.0,263.28 691.0,263.65 692.0,264.01 693.0,264.37 694.0,264.72 695.0,265.07 696.0,265.42 697.0,265.76 698.0,266.09 699.0,266.43 700.0,266.76 701.0,267.08 702.0,267.41 703.0,267.72 704.0,268.04 705.0,268.35 706.0,268.65 707.0,268.95 708.0,269.25 709.0,269.54 710.0,269.83 711.0,270.12 712.0,270.40 713.0,270.67 714.0,270.95 715.0,271.21 716.0,271.48 717.0,271.74 718.0,272.00 719.0,272.25 720.0,272.50 721.0,272.75 722.0,272.99 723.0,273.23 724.0,273.46 725.0,273.69 726.0,273.92 727.0,274.14 728.0,274.36 729.0,274.58 730.0,274.79 731.0,275.00 732.0,275.20 733.0,275.41 734.0,275.61 735.0,275.80 736.0,276.00 737.0,276.18 738.0,276.37 739.0,276.55 740.0,276.73 741.0,276.91 742.0,277.09 743.0,277.26 744.0,277.42 745.0,277.59 746.0,277.75 747.0,277.91 748.0,278.07 749.0,278.22 750.0,278.38 751.0,278.52 752.0,278.67 753.0,278.81 754.0,278.96 755.0,279.09 756.0,279.23 757.0,279.36 758.0,279.50 759.0,279.63 760.0,279.75 761.0,279.88 762.0,280.00 763.0,280.12 764.0,280.24 765.0,280.36 766.0,280.47 767.0,280.58 768.0,280.69 769.0,280.80 770.0,280.91 771.0,281.01 772.0,281.11 773.0,281.21 774.0,281.31 775.0,281.41 776.0,281.50 777.0,281.60 778.0,281.69 779.0,281.78 780.0,281.87 781.0,281.95 782.0,282.04 783.0,282.12 784.0,282.21 785.0,282.29 786.0,282.37 787.0,282.44 788.0,282.52 789.0,282.60 790.0,282.67 791.0,282.74 792.0,282.81 793.0,282.88 794.0,282.95 795.0,283.02 796.0,283.08 797.0,283.15 798.0,283.21 799.0,283.28 800.0,283.34 801.0,283.40 802.0,283.46 803.0,283.51 804.0,283.57 805.0,283.63 806.0,283.68 807.0,283.74 808.0,283.79 809.0,283.84 810.0,283.89 811.0,283.94 812.0,283.99 813.0,284.04 814.0,284.09 815.0,284.13 816.0,284.18 817.0,284.22 818.0,284.27 819.0,284.31 820.0,284.35 821.0,284.39 822.0,284.44 823.0,284.48 824.0,284.51 825.0,284.55 826.0,284.59 827.0,284.63 828.0,284.67 829.0,284.70 830.0,284.74 831.0,284.77 832.0,284.80 833.0,284.84 834.0,284.87 835.0,284.90 836.0,284.93 837.0,284.97 838.0,285.00 839.0,285.03 840.0,285.05 841.0,285.08 842.0,285.11 843.0,285.14 844.0,285.17 845.0,285.19 846.0,285.22 847.0,285.24 848.0,285.27 849.0,285.29 850.0,285.32 851.0,285.34 852.0,285.37 853.0,285.39 854.0,285.41 855.0,285.43 856.0,285.46 857.0,285.48 858.0,285.50 859.0,285.52 860.0,285.54 861.0,285.56 862.0,285.58 863.0,285.60 864.0,285.62 865.0,285.63 866.0,285.65 867.0,285.67 868.0,285.69 869.0,285.70 870.0,285.72 871.0,285.74 872.0,285.75 873.0,285.77 874.0,285.78 875.0,285.80 876.0,285.81 877.0,285.83 878.0,285.84 879.0,285.86 880.0,285.87 881.0,285.89 882.0,285.90 883.0,285.91 884.0,285.93 885.0,285.94 886.0,285.95 887.0,285.96 888.0,285.97 889.0,285.99 890.0,286.00 891.0,286.01 892.0,286.02 893.0,286.03 894.0,286.04 895.0,286.05 896.0,286.06 897.0,286.07 898.0,286.08 899.0,286.09 900.0,286.10 901.0,286.11 902.0,286.12 903.0,286.13 904.0,286.14 905.0,286.15 906.0,286.16 907.0,286.16 908.0,286.17 909.0,286.18 1000.0,286.50 1119.0,286.60 1168.0,288.30 1216.0,290.50" fill="none" stroke="#ff0000" stroke-width="3" stroke-linejoin="round"/>
</g>
<path d="M683.5 361V428M703.5 361V428M717.5 361V428M728.5 361V428M737.5 361V428M745.5 361V428M751.5 361V428M757.5 361V428M762.5 361V428M797.5 361V428M817.5 361V428M831.5 361V428M842.5 361V428M851.5 361V428M858.5 361V428M865.5 361V428M871.5 361V428M876.5 361V428M910.5 361V428M930.5 361V428M944.5 361V428M955.5 361V428M964.5 361V428M972.5 361V428M978.5 361V428M984.5 361V428M989.5 361V428M1023.5 361V428M1043.5 361V428M1057.5 361V428M1068.5 361V428M1077.5 361V428M1085.5 361V428M1092.5 361V428M1097.5 361V428M1103.5 361V428M1137.5 361V428M1157.5 361V428M1171.5 361V428M1182.5 361V428M1191.5 361V428M1198.5 361V428M1205.5 361V428M1211.5 361V428M650 371.5H1216M650 383.5H1216M650 394.5H1216M650 405.5H1216" stroke="#7f7f7f" stroke-width="1" stroke-dasharray="3 3" fill="none" shape-rendering="crispEdges"/>
<rect x="649" y="417" width="568" height="1" fill="#0000ff"/>
<rect x="649" y="360" width="568" height="1" fill="#7f7f7f"/>
<rect x="649" y="428" width="568" height="1" fill="#7f7f7f"/>
<rect x="649" y="360" width="1" height="69" fill="#7f7f7f"/>
<rect x="1216" y="360" width="1" height="69" fill="#7f7f7f"/>
<text x="646.9" y="363.5" font-size="9.5" fill="#0000ff" text-anchor="end" font-weight="normal" letter-spacing="0.4">5.000m</text>
<text x="646.9" y="386.5" font-size="9.5" fill="#0000ff" text-anchor="end" font-weight="normal" letter-spacing="0.4">3.000m</text>
<text x="646.9" y="408.5" font-size="9.5" fill="#0000ff" text-anchor="end" font-weight="normal" letter-spacing="0.4">1.000m</text>
<text x="646.9" y="431.5" font-size="9.5" fill="#0000ff" text-anchor="end" font-weight="normal" letter-spacing="0.4">-1.000m</text>
<text x="650" y="439" font-size="9.5" fill="#0000ff" text-anchor="start" font-weight="normal" letter-spacing="0.4">1</text>
<text x="763.4" y="439" font-size="9.5" fill="#0000ff" text-anchor="middle" font-weight="normal" letter-spacing="0.4">10</text>
<text x="876.8" y="439" font-size="9.5" fill="#0000ff" text-anchor="middle" font-weight="normal" letter-spacing="0.4">100</text>
<text x="990.2" y="439" font-size="9.5" fill="#0000ff" text-anchor="middle" font-weight="normal" letter-spacing="0.4">1K</text>
<text x="1103.6" y="439" font-size="9.5" fill="#0000ff" text-anchor="middle" font-weight="normal" letter-spacing="0.4">10K</text>
<text x="1217.0" y="439" font-size="9.5" fill="#0000ff" text-anchor="middle" font-weight="normal" letter-spacing="0.4">100K</text>
<text x="868" y="464" font-size="9.5" fill="#0000ff" text-anchor="start" font-weight="normal" letter-spacing="0.4">F (Hz)</text>
<text x="649" y="452" font-size="9.5" fill="#000000" text-anchor="start" font-weight="normal"  letter-spacing="0.4">GD(v(out))</text>
<clipPath id="pc3"><rect x="649" y="360" width="568" height="69"/></clipPath>
<g clip-path="url(#pc3)">
<polyline points="760.5,350.68 761.0,351.95 761.5,353.20 762.0,354.42 762.5,355.61 763.0,356.79 763.5,357.94 764.0,359.07 764.5,360.18 765.0,361.26 765.5,362.33 766.0,363.38 766.5,364.40 767.0,365.41 767.5,366.39 768.0,367.36 768.5,368.31 769.0,369.24 769.5,370.16 770.0,371.05 770.5,371.93 771.0,372.79 771.5,373.64 772.0,374.47 772.5,375.28 773.0,376.08 773.5,376.86 774.0,377.63 774.5,378.38 775.0,379.12 775.5,379.85 776.0,380.56 776.5,381.26 777.0,381.94 777.5,382.61 778.0,383.27 778.5,383.91 779.0,384.55 779.5,385.17 780.0,385.78 780.5,386.37 781.0,386.96 781.5,387.53 782.0,388.10 782.5,388.65 783.0,389.19 783.5,389.73 784.0,390.25 784.5,390.76 785.0,391.26 785.5,391.75 786.0,392.24 786.5,392.71 787.0,393.18 787.5,393.63 788.0,394.08 788.5,394.52 789.0,394.95 789.5,395.37 790.0,395.78 790.5,396.19 791.0,396.59 791.5,396.98 792.0,397.36 792.5,397.74 793.0,398.11 793.5,398.47 794.0,398.82 794.5,399.17 795.0,399.51 795.5,399.85 796.0,400.18 796.5,400.50 797.0,400.81 797.5,401.12 798.0,401.43 798.5,401.73 799.0,402.02 799.5,402.30 800.0,402.59 800.5,402.86 801.0,403.13 801.5,403.40 802.0,403.66 802.5,403.91 803.0,404.16 803.5,404.41 804.0,404.65 804.5,404.89 805.0,405.12 805.5,405.35 806.0,405.57 806.5,405.79 807.0,406.00 807.5,406.21 808.0,406.42 808.5,406.62 809.0,406.82 809.5,407.02 810.0,407.21 810.5,407.40 811.0,407.58 811.5,407.76 812.0,407.94 812.5,408.11 813.0,408.28 813.5,408.45 814.0,408.61 814.5,408.77 815.0,408.93 815.5,409.09 816.0,409.24 816.5,409.39 817.0,409.53 817.5,409.68 818.0,409.82 818.5,409.95 819.0,410.09 819.5,410.22 820.0,410.35 820.5,410.48 821.0,410.60 821.5,410.73 822.0,410.85 822.5,410.96 823.0,411.08 823.5,411.19 824.0,411.31 824.5,411.41 825.0,411.52 825.5,411.63 826.0,411.73 826.5,411.83 827.0,411.93 827.5,412.03 828.0,412.12 828.5,412.22 829.0,412.31 829.5,412.40 830.0,412.49 830.5,412.57 831.0,412.66 831.5,412.74 832.0,412.82 832.5,412.90 833.0,412.98 833.5,413.06 834.0,413.14 834.5,413.21 835.0,413.28 835.5,413.35 836.0,413.42 836.5,413.49 837.0,413.56 837.5,413.63 838.0,413.69 838.5,413.75 839.0,413.82 839.5,413.88 840.0,413.94 840.5,414.00 841.0,414.06 841.5,414.11 842.0,414.17 842.5,414.22 843.0,414.28 843.5,414.33 844.0,414.38 844.5,414.43 845.0,414.48 845.5,414.53 846.0,414.58 846.5,414.62 847.0,414.67 847.5,414.71 848.0,414.76 848.5,414.80 849.0,414.84 849.5,414.88 850.0,414.93 850.5,414.97 851.0,415.00 851.5,415.04 852.0,415.08 852.5,415.12 853.0,415.15 853.5,415.19 854.0,415.22 854.5,415.26 855.0,415.29 855.5,415.33 856.0,415.36 856.5,415.39 857.0,415.42 857.5,415.45 858.0,415.48 858.5,415.51 859.0,415.54 859.5,415.57 860.0,415.60 860.5,415.62 861.0,415.65 861.5,415.68 862.0,415.70 862.5,415.73 863.0,415.75 863.5,415.78 864.0,415.80 864.5,415.82 865.0,415.85 865.5,415.87 866.0,415.89 866.5,415.91 867.0,415.93 867.5,415.95 868.0,415.97 868.5,415.99 869.0,416.01 869.5,416.03 915.3,416.10 915.3,417.50 1216.0,417.50" fill="none" stroke="#000000" stroke-width="3" stroke-linejoin="round"/>
</g>
<path d="M683.5 476V543M703.5 476V543M717.5 476V543M728.5 476V543M737.5 476V543M745.5 476V543M751.5 476V543M757.5 476V543M762.5 476V543M797.5 476V543M817.5 476V543M831.5 476V543M842.5 476V543M851.5 476V543M858.5 476V543M865.5 476V543M871.5 476V543M876.5 476V543M910.5 476V543M930.5 476V543M944.5 476V543M955.5 476V543M964.5 476V543M972.5 476V543M978.5 476V543M984.5 476V543M989.5 476V543M1023.5 476V543M1043.5 476V543M1057.5 476V543M1068.5 476V543M1077.5 476V543M1085.5 476V543M1092.5 476V543M1097.5 476V543M1103.5 476V543M1137.5 476V543M1157.5 476V543M1171.5 476V543M1182.5 476V543M1191.5 476V543M1198.5 476V543M1205.5 476V543M1211.5 476V543M650 485.5H1216M650 494.5H1216M650 504.5H1216M650 514.5H1216M650 533.5H1216" stroke="#7f7f7f" stroke-width="1" stroke-dasharray="3 3" fill="none" shape-rendering="crispEdges"/>
<rect x="649" y="524" width="568" height="1" fill="#0000ff"/>
<rect x="649" y="475" width="568" height="1" fill="#7f7f7f"/>
<rect x="649" y="543" width="568" height="1" fill="#7f7f7f"/>
<rect x="649" y="475" width="1" height="69" fill="#7f7f7f"/>
<rect x="1216" y="475" width="1" height="69" fill="#7f7f7f"/>
<text x="646.9" y="478.7" font-size="9.5" fill="#0000ff" text-anchor="end" font-weight="normal" letter-spacing="0.4">5.000u</text>
<text x="646.9" y="507.5" font-size="9.5" fill="#0000ff" text-anchor="end" font-weight="normal" letter-spacing="0.4">2.000u</text>
<text x="646.9" y="527.5" font-size="9.5" fill="#0000ff" text-anchor="end" font-weight="normal" letter-spacing="0.4">0.000u</text>
<text x="646.9" y="546.5" font-size="9.5" fill="#0000ff" text-anchor="end" font-weight="normal" letter-spacing="0.4">-2.000u</text>
<text x="650" y="554" font-size="9.5" fill="#0000ff" text-anchor="start" font-weight="normal" letter-spacing="0.4">1</text>
<text x="763.4" y="554" font-size="9.5" fill="#0000ff" text-anchor="middle" font-weight="normal" letter-spacing="0.4">10</text>
<text x="876.8" y="554" font-size="9.5" fill="#0000ff" text-anchor="middle" font-weight="normal" letter-spacing="0.4">100</text>
<text x="990.2" y="554" font-size="9.5" fill="#0000ff" text-anchor="middle" font-weight="normal" letter-spacing="0.4">1K</text>
<text x="1103.6" y="554" font-size="9.5" fill="#0000ff" text-anchor="middle" font-weight="normal" letter-spacing="0.4">10K</text>
<text x="1217.0" y="554" font-size="9.5" fill="#0000ff" text-anchor="middle" font-weight="normal" letter-spacing="0.4">100K</text>
<text x="868" y="579" font-size="9.5" fill="#0000ff" text-anchor="start" font-weight="normal" letter-spacing="0.4">F (Hz)</text>
<text x="649" y="567" font-size="9.5" fill="#000000" text-anchor="start" font-weight="normal"  letter-spacing="0.4">GD(v(out))</text>
<clipPath id="pc4"><rect x="649" y="475" width="568" height="69"/></clipPath>
<g clip-path="url(#pc4)">
<polyline points="945.0,467.78 945.5,468.48 946.0,469.17 946.5,469.86 947.0,470.54 947.5,471.21 948.0,471.87 948.5,472.52 949.0,473.17 949.5,473.81 950.0,474.44 950.5,475.06 951.0,475.68 951.5,476.29 952.0,476.89 952.5,477.48 953.0,478.07 953.5,478.65 954.0,479.23 954.5,479.79 955.0,480.35 955.5,480.91 956.0,481.46 956.5,482.00 957.0,482.53 957.5,483.06 958.0,483.59 958.5,484.10 959.0,484.61 959.5,485.12 960.0,485.62 960.5,486.11 961.0,486.60 961.5,487.08 962.0,487.55 962.5,488.02 963.0,488.49 963.5,488.95 964.0,489.40 964.5,489.85 965.0,490.30 965.5,490.73 966.0,491.17 966.5,491.59 967.0,492.02 967.5,492.44 968.0,492.85 968.5,493.26 969.0,493.66 969.5,494.06 970.0,494.46 970.5,494.85 971.0,495.23 971.5,495.61 972.0,495.99 972.5,496.36 973.0,496.73 973.5,497.09 974.0,497.45 974.5,497.80 975.0,498.15 975.5,498.50 976.0,498.84 976.5,499.18 977.0,499.52 977.5,499.85 978.0,500.17 978.5,500.50 979.0,500.82 979.5,501.13 980.0,501.44 980.5,501.75 981.0,502.06 981.5,502.36 982.0,502.66 982.5,502.95 983.0,503.24 983.5,503.53 984.0,503.81 984.5,504.09 985.0,504.37 985.5,504.64 986.0,504.91 986.5,505.18 987.0,505.45 987.5,505.71 988.0,505.97 988.5,506.22 989.0,506.47 989.5,506.72 990.0,506.97 990.5,507.21 991.0,507.45 991.5,507.69 992.0,507.93 992.5,508.16 993.0,508.39 993.5,508.62 994.0,508.84 994.5,509.06 995.0,509.28 995.5,509.50 996.0,509.71 996.5,509.92 997.0,510.13 997.5,510.34 998.0,510.54 998.5,510.75 999.0,510.95 999.5,511.14 1000.0,511.34 1000.5,511.53 1001.0,511.72 1001.5,511.91 1002.0,512.09 1002.5,512.28 1003.0,512.46 1003.5,512.64 1004.0,512.82 1004.5,512.99 1005.0,513.17 1005.5,513.34 1006.0,513.51 1006.5,513.67 1007.0,513.84 1007.5,514.00 1008.0,514.16 1008.5,514.32 1009.0,514.48 1009.5,514.64 1010.0,514.79 1010.5,514.94 1011.0,515.09 1011.5,515.24 1012.0,515.39 1012.5,515.54 1013.0,515.68 1013.5,515.82 1014.0,515.96 1014.5,516.10 1015.0,516.24 1015.5,516.37 1016.0,516.51 1016.5,516.64 1017.0,516.77 1017.5,516.90 1018.0,517.03 1018.5,517.15 1019.0,517.28 1019.5,517.40 1020.0,517.52 1020.5,517.64 1021.0,517.76 1021.5,517.88 1022.0,517.99 1022.5,518.11 1023.0,518.22 1023.5,518.34 1024.0,518.45 1024.5,518.56 1025.0,518.66 1025.5,518.77 1026.0,518.88 1026.5,518.98 1027.0,519.09 1027.5,519.19 1028.0,519.29 1028.5,519.39 1029.0,519.49 1029.5,519.58 1030.0,519.68 1030.5,519.78 1031.0,519.87 1031.5,519.96 1032.0,520.05 1032.5,520.15 1033.0,520.24 1033.5,520.32 1034.0,520.41 1034.5,520.50 1035.0,520.58 1035.5,520.67 1036.0,520.75 1036.5,520.83 1037.0,520.92 1037.5,521.00 1038.0,521.08 1038.5,521.16 1039.0,521.23 1039.5,521.31 1040.0,521.39 1050.0,522.30 1065.0,521.40 1094.9,520.50 1188.0,520.00 1188.0,519.30 1216.0,519.30" fill="none" stroke="#000000" stroke-width="3" stroke-linejoin="round"/>
</g>
<rect x="10" y="35" width="23" height="21" fill="url(#dith)"/>
<rect x="10" y="35" width="23" height="1" fill="#a0a0a0"/>
<rect x="10" y="35" width="1" height="21" fill="#a0a0a0"/>
<rect x="10" y="55" width="23" height="1" fill="#ffffff"/>
<rect x="32" y="35" width="1" height="21" fill="#ffffff"/>
<path d="M18 40 L18 51 L21 48 L23 53 L25 52 L23 47 L27 47 Z" fill="#000000"/>
<path d="M36 47.5 L40 43.5 L44 47.5 L48 43.5 L52 47.5" stroke="#000000" stroke-width="1" fill="none" />
<path d="M60 39 H74 V43 H72.5 L72 41.5 H69 V51 H71 V53 H63 V51 H65 V41.5 H62 L61.5 43 H60 Z" fill="#000000"/>
<rect x="82" y="39" width="4" height="4" fill="#000000"/>
<path d="M85 40.5 H89.5 V50.5 H97" stroke="#000000" stroke-width="1" fill="none" />
<rect x="105" y="38" width="4" height="4" fill="#000000"/>
<path d="M108 41 L120 53" stroke="#000000" stroke-width="1" fill="none" />
<rect x="129.5" y="38.5" width="13" height="13" rx="2" fill="#ffff00" stroke="#000"/>
<rect x="131.5" y="40.5" width="9" height="5" fill="#b0b0b0" stroke="#555" stroke-width="0.8"/>
<rect x="130" y="52" width="3" height="2" fill="#000000"/>
<rect x="139" y="52" width="3" height="2" fill="#000000"/>
<rect x="132" y="49" width="9" height="1" fill="#000000"/>
<path d="M151 45 L158 38" stroke="#000000" stroke-width="1" fill="none" />
<rect x="160.5" y="38.5" width="6" height="6" fill="none" stroke="#000"/>
<path d="M154.5 46 L158 49.5 L154.5 53 L151 49.5 Z" stroke="#000000" stroke-width="1" fill="none" />
<circle cx="163.5" cy="49.5" r="3.5" fill="none" stroke="#000"/>
<path d="M174 44 L182 44 L178 48 Z" fill="#000000"/>
<path d="M189.5 38 V53 M189.5 38.5 H203.5 V46.5 H189.5" stroke="#000000" stroke-width="1" fill="none" />
<circle cx="218.5" cy="40" r="2.3" fill="#000"/>
<path d="M215 44 H221 V51 H223 V53 H214 V51 H216 V46 H215 Z" fill="#000000"/>
<path d="M236 38 L236 49 L239 46 L241 51 L243 50 L241 45 L245 45 Z" fill="#000000"/>
<text x="242" y="50" font-size="14" font-weight="bold" fill="#000080" font-family="Liberation Serif">?</text>
<circle cx="264" cy="44" r="6" fill="#1030e0"/><path d="M260 41 l3 -2 l3 2 l-2 3z" fill="#10c010"/>
<rect x="262.5" y="43.5" width="8" height="9" fill="#fff" stroke="#000"/>
<path d="M264 47.5 H269 M264 49.5 H269" stroke="#000080" stroke-width="1" fill="none" />
<path d="M268 42 Q271 39 274 43" stroke="#a00000" stroke-width="1.5" fill="none" />
<rect x="281.5" y="38.5" width="15" height="15" fill="#fff" stroke="#000"/>
<polygon points="289.83,44.88 287.88,46.83 285.12,46.83 283.17,44.88 283.17,42.12 285.12,40.17 287.88,40.17 289.83,42.12" fill="#008000"/>
<polygon points="295.01,49.95 292.95,52.01 290.05,52.01 287.99,49.95 287.99,47.05 290.05,44.99 292.95,44.99 295.01,47.05" fill="#ff0000"/>
<path d="M290 47 L293 50 M293 47 L290 50" stroke="#fff" stroke-width="1" fill="none" />
<rect x="303" y="37" width="1" height="17" fill="#a0a0a0"/>
<rect x="304" y="37" width="1" height="17" fill="#ffffff"/>
<rect x="10" y="61" width="23" height="21" fill="url(#dith)"/>
<rect x="10" y="61" width="23" height="1" fill="#a0a0a0"/>
<rect x="10" y="61" width="1" height="21" fill="#a0a0a0"/>
<rect x="10" y="81" width="23" height="1" fill="#ffffff"/>
<rect x="32" y="61" width="1" height="21" fill="#ffffff"/>
<text x="13.5" y="75.5" font-size="7.5" font-weight="bold" fill="#000" font-family="Liberation Mono" textLength="16" lengthAdjust="spacingAndGlyphs">TEXT</text>
<rect x="33" y="61" width="23" height="21" fill="url(#dith)"/>
<rect x="33" y="61" width="23" height="1" fill="#a0a0a0"/>
<rect x="33" y="61" width="1" height="21" fill="#a0a0a0"/>
<rect x="33" y="81" width="23" height="1" fill="#ffffff"/>
<rect x="55" y="61" width="1" height="21" fill="#ffffff"/>
<text x="41" y="72" font-size="7.5" font-weight="bold" fill="#000" font-family="Liberation Mono">R1</text>
<path d="M37 76.5 L40 73.5 L44 77.5 L48 73.5 L52 77.5 L53 76.5" stroke="#000000" stroke-width="1" fill="none" />
<rect x="59.5" y="66.5" width="9" height="8" fill="#fff" stroke="#000"/>
<text x="61.5" y="73.5" font-size="7" font-weight="bold" fill="#000" font-family="Liberation Mono">1</text>
<rect x="62" y="75" width="1" height="5" fill="#000000"/>
<path d="M68 70 L71 73 L75 69" stroke="#000000" stroke-width="1" fill="none" />
<text x="82" y="71" font-size="7" fill="#a8a8a8" font-family="Liberation Mono">VIP</text>
<path d="M84 73 L88 77 L98 67" stroke="#a8a8a8" stroke-width="2" fill="none" />
<path d="M106 71 L114 71 L110 75 Z" fill="#a8a8a8"/>
<rect x="120.5" y="66.5" width="11" height="8" fill="#fff" stroke="#8b0000"/>
<text x="121.5" y="73.5" font-size="7" font-weight="bold" fill="#000" font-family="Liberation Mono">13</text>
<rect x="125" y="75" width="1" height="5" fill="#000000"/>
<path d="M131 75 L136 70" stroke="#000000" stroke-width="1" fill="none" />
<path d="M144 68.5 H155" stroke="#0000ff" stroke-width="1.3" fill="none" />
<path d="M155 66 L158 68.5 L155 71 Z" fill="#0000ff"/>
<path d="M144 75.5 H158" stroke="#000000" stroke-width="1" fill="none" />
<path d="M149 73 L152 75.5 L149 78 Z" fill="#000000"/>
<rect x="152" y="73" width="1" height="6" fill="#000000"/>
<path d="M167 75.5 H181" stroke="#000000" stroke-width="1" fill="none" />
<path d="M172 73 L175 75.5 L172 78 Z" fill="#000000"/>
<rect x="175" y="73" width="1" height="6" fill="#000000"/>
<ellipse cx="173.5" cy="70.5" rx="2" ry="3" fill="#ffd800"/><circle cx="173.5" cy="71" r="1.5" fill="#f00"/>
<path d="M167 65 L171 67" stroke="#909090" stroke-width="1.5" fill="none" />
<text x="190" y="71" font-size="7" fill="#a8a8a8" font-family="Liberation Mono">ON</text>
<path d="M190 75.5 H204" stroke="#a0a0a0" stroke-width="1" fill="none" />
<path d="M195 73 L198 75.5 L195 78 Z" fill="#a0a0a0"/>
<rect x="198" y="73" width="1" height="6" fill="#a0a0a0"/>
<rect x="212" y="70" width="3" height="3" fill="#000000"/>
<rect x="226" y="70" width="3" height="3" fill="#000000"/>
<rect x="214" y="71" width="14" height="1" fill="#000000"/>
<rect x="235" y="65" width="1" height="1" fill="#000000"/>
<rect x="235" y="69" width="1" height="1" fill="#000000"/>
<rect x="235" y="73" width="1" height="1" fill="#000000"/>
<rect x="235" y="77" width="1" height="1" fill="#000000"/>
<rect x="239" y="65" width="1" height="1" fill="#000000"/>
<rect x="239" y="69" width="1" height="1" fill="#000000"/>
<rect x="239" y="73" width="1" height="1" fill="#000000"/>
<rect x="239" y="77" width="1" height="1" fill="#000000"/>
<rect x="243" y="65" width="1" height="1" fill="#000000"/>
<rect x="243" y="69" width="1" height="1" fill="#000000"/>
<rect x="243" y="73" width="1" height="1" fill="#000000"/>
<rect x="243" y="77" width="1" height="1" fill="#000000"/>
<rect x="247" y="65" width="1" height="1" fill="#000000"/>
<rect x="247" y="69" width="1" height="1" fill="#000000"/>
<rect x="247" y="73" width="1" height="1" fill="#000000"/>
<rect x="247" y="77" width="1" height="1" fill="#000000"/>
<rect x="251" y="65" width="1" height="1" fill="#000000"/>
<rect x="251" y="69" width="1" height="1" fill="#000000"/>
<rect x="251" y="73" width="1" height="1" fill="#000000"/>
<rect x="251" y="77" width="1" height="1" fill="#000000"/>
<path d="M259 71 L267 71 L263 75 Z" fill="#000000"/>
<rect x="273.5" y="64.5" width="15" height="14" fill="none" stroke="#000" stroke-width="1.3"/><rect x="280.5" y="73.5" width="8" height="5" fill="none" stroke="#000"/>
<rect x="281" y="76" width="8" height="1" fill="#000000"/>
<rect x="294" y="61" width="23" height="21" fill="url(#dith)"/>
<rect x="294" y="61" width="23" height="1" fill="#a0a0a0"/>
<rect x="294" y="61" width="1" height="21" fill="#a0a0a0"/>
<rect x="294" y="81" width="23" height="1" fill="#ffffff"/>
<rect x="316" y="61" width="1" height="21" fill="#ffffff"/>
<path d="M301 66 V69 L304 71 L301 73 V76 L304 78 M304 72 L306 74 L304 76" stroke="#000000" stroke-width="1.2" fill="none" />
<path d="M307 72 L307 79 L309 77.5 L310.5 80 L311.5 79 L310 77 L312 77 Z" fill="#000000"/>
<rect x="318" y="63" width="1" height="18" fill="#a0a0a0"/>
<rect x="319" y="63" width="1" height="18" fill="#ffffff"/>
<rect x="324.5" y="69.5" width="10" height="9" fill="#fff" stroke="#000" stroke-width="1.2"/>
<path d="M326 73.5 H333 M326 75.5 H333" stroke="#000000" stroke-width="1" fill="none" />
<path d="M327 69 L331 65 L336 65 L336 68" stroke="#000000" stroke-width="1.2" fill="none" />
<rect x="338" y="65" width="2" height="4" fill="#000080"/>
<rect x="346" y="63" width="1" height="18" fill="#a0a0a0"/>
<rect x="347" y="63" width="1" height="18" fill="#ffffff"/>
<rect x="355.5" y="66.5" width="10" height="9" fill="none" stroke="#a0a0a0" stroke-width="1.5"/><rect x="358.5" y="69.5" width="10" height="9" fill="none" stroke="#a0a0a0" stroke-width="1.5"/>
<rect x="354" y="65" width="3" height="3" fill="#a0a0a0"/>
<rect x="364" y="65" width="3" height="3" fill="#a0a0a0"/>
<rect x="357" y="74" width="3" height="3" fill="#a0a0a0"/>
<rect x="367" y="77" width="3" height="3" fill="#a0a0a0"/>
<rect x="357" y="77" width="3" height="3" fill="#a0a0a0"/>
<rect x="354" y="74" width="3" height="3" fill="#a0a0a0"/>
<path d="M377 71.5 H390" stroke="#a0a0a0" stroke-width="1" fill="none" />
<path d="M377 68 L383 71.5 L377 75 Z" fill="#a0a0a0"/>
<path d="M390 68 L384 71.5 L390 75 Z" fill="#a0a0a0"/>
<path d="M401 67 A6 6 0 1 1 400 75" stroke="#a0a0a0" stroke-width="1.2" fill="none" />
<rect x="400" y="66" width="3" height="3" fill="#a0a0a0"/>
<rect x="405" y="71" width="1" height="1" fill="#a0a0a0"/>
<path d="M430 64 V80 M430 68.5 H434 M425 70 Q422 74 425 76 H434" stroke="#a0a0a0" stroke-width="1.2" fill="none" />
<path d="M434 66 L437 68.5 L434 71 Z" fill="#a0a0a0"/>
<path d="M444 70.5 H460 M449 67 V73 Q449 77 452 77 Q455 77 455 73 V67" stroke="#a0a0a0" stroke-width="1.2" fill="none" />
<path d="M446.5 67 L449 64 L451.5 67Z" fill="#a0a0a0"/>
<rect x="466" y="63" width="1" height="18" fill="#a0a0a0"/>
<rect x="467" y="63" width="1" height="18" fill="#ffffff"/>
<path d="M473 67 h3 v-2 h2 v2 h1 v-2 h2 v2 h3 v5 h-5 v-1 h-1 v1 h-5 Z" fill="#000000"/>
<path d="M475 76.5 l2 -1.5 l2 1.5 l2 -1.5 l2 1.5 l2 -1.5" stroke="#000080" stroke-width="1" fill="none" />
<path d="M495 67 h3 v-2 h4 v2 h2 v-2 h4 v2 h3 v11 h-6 v-3 h-2 v3 h-6 Z" fill="#000000"/>
<rect x="517" y="63" width="1" height="18" fill="#a0a0a0"/>
<rect x="518" y="63" width="1" height="18" fill="#ffffff"/>
<rect x="524.5" y="65.5" width="15" height="10" fill="none" stroke="#a0a0a0" stroke-width="1.5"/>
<path d="M527 68 H530 M533 68 H537 M533 71 H537 M533 73 H537 M531 76 L527 80 M532 76 L537 80" stroke="#a0a0a0" stroke-width="1.2" fill="none" />
<rect x="545" y="63" width="1" height="18" fill="#a0a0a0"/>
<rect x="546" y="63" width="1" height="18" fill="#ffffff"/>
<polygon points="28.89,100.56 24.56,104.89 18.44,104.89 14.11,100.56 14.11,94.44 18.44,90.11 24.56,90.11 28.89,94.44" fill="#a0a0a0"/>
<rect x="20" y="92" width="3" height="6" fill="#fff"/>
<rect x="20" y="100" width="3" height="2" fill="#fff"/>
<polygon points="51.89,100.56 47.56,104.89 41.44,104.89 37.11,100.56 37.11,94.44 41.44,90.11 47.56,90.11 51.89,94.44" fill="#a0a0a0"/>
<path d="M41.5 94.5 L47.5 100.5 M47.5 94.5 L41.5 100.5" stroke="#fff" stroke-width="1.5" fill="none" />
<rect x="58" y="89" width="1" height="17" fill="#a0a0a0"/>
<rect x="59" y="89" width="1" height="17" fill="#ffffff"/>
<rect x="64" y="90" width="10" height="9" fill="#a0a0a0"/>
<rect x="68" y="93" width="9" height="9" fill="#c8c8c8"/>
<rect x="72" y="97" width="8" height="8" fill="#a0a0a0"/>
<rect x="87" y="90" width="10" height="9" fill="#a0a0a0"/>
<rect x="91" y="93" width="9" height="9" fill="#c8c8c8"/>
<rect x="95" y="97" width="8" height="8" fill="#a0a0a0"/>
<rect x="109" y="89" width="1" height="17" fill="#a0a0a0"/>
<rect x="110" y="89" width="1" height="17" fill="#ffffff"/>
<circle cx="121.5" cy="95.5" r="5.3" fill="#fff" stroke="#000" stroke-width="1.8"/>
<path d="M125 99 L130 104" stroke="#000000" stroke-width="2.6" fill="none" />
<path d="M118.5 95.5 H124.5" stroke="#000000" stroke-width="2" fill="none" />
<path d="M121.5 92.5 V98.5" stroke="#000000" stroke-width="2" fill="none" />
<circle cx="144.5" cy="95.5" r="5.3" fill="#fff" stroke="#000" stroke-width="1.8"/>
<path d="M148 99 L153 104" stroke="#000000" stroke-width="2.6" fill="none" />
<path d="M141.5 95.5 H147.5" stroke="#000000" stroke-width="2" fill="none" />
<rect x="160" y="89" width="1" height="17" fill="#a0a0a0"/>
<rect x="161" y="89" width="1" height="17" fill="#ffffff"/>
<path d="M167 93 h5 l2 2 h8 v10 h-15 Z" fill="#a8a8a8"/>
<rect x="188" y="89" width="1" height="17" fill="#a0a0a0"/>
<rect x="189" y="89" width="1" height="17" fill="#ffffff"/>
<circle cx="201" cy="97" r="7" fill="#b8b8b8"/><path d="M196 94 h10 M196 99 h10 M201 90 v14" stroke="#fff" stroke-width="0.8"/>
<text x="217" y="105" font-size="18" font-weight="bold" fill="#a8a8a8" font-family="Liberation Serif">F</text>
<path d="M607 40 L607 51 L610 48 L612 53 L614 52 L612 47 L616 47 Z" fill="#000000"/>
<path d="M627.5 46.5 L634 40" stroke="#000000" stroke-width="1" fill="none" />
<rect x="637.5" y="39.5" width="5.5" height="6" fill="none" stroke="#000"/>
<path d="M630.5 47 L634 50.5 L630.5 54 L627 50.5 Z" stroke="#000000" stroke-width="1" fill="none" />
<circle cx="640" cy="50.5" r="3.2" fill="none" stroke="#000"/>
<path d="M651 45 L659 45 L655 49 Z" fill="#000000"/>
<rect x="662" y="36" width="23" height="21" fill="url(#dith)"/>
<rect x="662" y="36" width="23" height="1" fill="#a0a0a0"/>
<rect x="662" y="36" width="1" height="21" fill="#a0a0a0"/>
<rect x="662" y="56" width="23" height="1" fill="#ffffff"/>
<rect x="684" y="36" width="1" height="21" fill="#ffffff"/>
<path d="M666.5 40 H677 M666.5 40 V52" stroke="#000" stroke-width="1" fill="none" stroke-dasharray="1 1" shape-rendering="crispEdges"/>
<path d="M667 50 Q671 55 674 46 Q677 38 681 44" stroke="#0000ff" stroke-width="1.3" fill="none" />
<path d="M688 46 Q691 37 694 46 Q697 53 700 46 Q702 40 704 46" stroke="#000080" stroke-width="1.3" fill="none" />
<path d="M688 49.5 H704 M690 52.5 H696 M698 52.5 H704" stroke="#000000" stroke-width="1.3" fill="none" />
<path d="M712 40 V45.5 H727 V40" stroke="#000080" stroke-width="1.3" fill="none" />
<path d="M713 51.5 H726" stroke="#000000" stroke-width="1" fill="none" />
<rect x="716" y="49" width="6" height="5" fill="#000000"/>
<rect x="718" y="50" width="2" height="3" fill="#fff"/>
<path d="M739 40 H748 M739 52 H748" stroke="#000" stroke-width="1" fill="none" stroke-dasharray="1 1" shape-rendering="crispEdges"/>
<path d="M736 39 V53" stroke="#000000" stroke-width="1" fill="none" />
<path d="M740 52 Q744 38 750 39" stroke="#0000ff" stroke-width="1.3" fill="none" />
<text x="737" y="50" font-size="6" font-weight="bold" fill="#000" font-family="Liberation Mono">10</text>
<path d="M759 52 H765 L769 46 H774" stroke="#0000ff" stroke-width="1.3" fill="none" />
<path d="M759 47 L766 42" stroke="#000000" stroke-width="1" fill="none" />
<text x="766" y="44" font-size="6" font-weight="bold" fill="#000" font-family="Liberation Mono">1.0</text>
<text x="783" y="43" font-size="7" font-weight="bold" fill="#a00000" font-family="Liberation Mono">F()</text>
<path d="M782 46 Q788 55 794 46" stroke="#0000ff" stroke-width="1.3" fill="none" />
<path d="M781 44 V53 M796 44 V53" stroke="#000000" stroke-width="1" fill="none" />
<path d="M804 39 H818 V43 H816.5 L816 41.5 H813 V51 H815 V53 H807 V51 H809 V41.5 H806 L805.5 43 H804 Z" fill="#000000"/>
<rect x="825" y="37" width="1" height="17" fill="#a0a0a0"/>
<rect x="826" y="37" width="1" height="17" fill="#ffffff"/>
<rect x="831.5" y="44.5" width="10" height="9" fill="#fff" stroke="#000" stroke-width="1.2"/>
<path d="M833 48.5 H840 M833 50.5 H840" stroke="#000000" stroke-width="1" fill="none" />
<path d="M834 44 L838 40 L843 40 L843 43" stroke="#000000" stroke-width="1.2" fill="none" />
<rect x="845" y="40" width="2" height="4" fill="#000080"/>
<rect x="853" y="37" width="1" height="17" fill="#a0a0a0"/>
<rect x="854" y="37" width="1" height="17" fill="#ffffff"/>
<path d="M861 39 L874 46 L861 53 Z" fill="#000000"/>
<rect x="885" y="40" width="11" height="11" fill="#a0a0a0"/>
<rect x="908" y="40" width="4" height="11" fill="#a0a0a0"/>
<rect x="915" y="40" width="4" height="11" fill="#a0a0a0"/>
<rect x="927" y="37" width="1" height="17" fill="#a0a0a0"/>
<rect x="928" y="37" width="1" height="17" fill="#ffffff"/>
<path d="M934 52 L941 45 L943 45 L950 38" stroke="#000000" stroke-width="1.2" fill="none" />
<rect x="956" y="50" width="3" height="3" fill="#000000"/>
<rect x="962" y="44" width="3" height="3" fill="#000000"/>
<rect x="968" y="38" width="3" height="3" fill="#000000"/>
<path d="M958 51 L969 40" stroke="#000000" stroke-width="1" fill="none" />
<rect x="978" y="37" width="1" height="17" fill="#a0a0a0"/>
<rect x="979" y="37" width="1" height="17" fill="#ffffff"/>
<rect x="985.5" y="39.5" width="14" height="13" fill="none" stroke="#000" stroke-width="1.3"/>
<rect x="987" y="41" width="11" height="10" fill="none" stroke="#000" stroke-width="1" stroke-dasharray="1 1" shape-rendering="crispEdges"/>
<rect x="1007.5" y="39.5" width="14" height="13" fill="none" stroke="#000" stroke-width="1.3"/>
<path d="M1012.5 40 V52 M1016.5 40 V52 M1008 43.5 H1021 M1008 47.5 H1021" stroke="#000" stroke-width="1" fill="none" stroke-dasharray="1 1" shape-rendering="crispEdges"/>
<rect x="1029" y="37" width="1" height="17" fill="#a0a0a0"/>
<rect x="1030" y="37" width="1" height="17" fill="#ffffff"/>
<rect x="1032" y="36" width="23" height="21" fill="url(#dith)"/>
<rect x="1032" y="36" width="23" height="1" fill="#a0a0a0"/>
<rect x="1032" y="36" width="1" height="21" fill="#a0a0a0"/>
<rect x="1032" y="56" width="23" height="1" fill="#ffffff"/>
<rect x="1054" y="36" width="1" height="21" fill="#ffffff"/>
<rect x="1036.5" y="39.5" width="14" height="13" fill="none" stroke="#000" stroke-width="1.3"/>
<path d="M1039.5 40 V52 M1041.5 40 V52 M1043.5 40 V52 M1045.5 40 V52 M1047.5 40 V52" stroke="#000000" stroke-width="1" fill="none" />
<rect x="1055" y="36" width="23" height="21" fill="url(#dith)"/>
<rect x="1055" y="36" width="23" height="1" fill="#a0a0a0"/>
<rect x="1055" y="36" width="1" height="21" fill="#a0a0a0"/>
<rect x="1055" y="56" width="23" height="1" fill="#ffffff"/>
<rect x="1077" y="36" width="1" height="21" fill="#ffffff"/>
<rect x="1059.5" y="39.5" width="14" height="13" fill="none" stroke="#000" stroke-width="1.3"/>
<path d="M1060 42.5 H1073 M1060 44.5 H1073 M1060 46.5 H1073 M1060 48.5 H1073 M1060 50.5 H1073" stroke="#000000" stroke-width="1" fill="none" />
<rect x="1078" y="36" width="23" height="21" fill="url(#dith)"/>
<rect x="1078" y="36" width="23" height="1" fill="#a0a0a0"/>
<rect x="1078" y="36" width="1" height="21" fill="#a0a0a0"/>
<rect x="1078" y="56" width="23" height="1" fill="#ffffff"/>
<rect x="1100" y="36" width="1" height="21" fill="#ffffff"/>
<rect x="1082.5" y="39.5" width="14" height="13" fill="none" stroke="#000" stroke-width="1.3"/>
<path d="M1085.5 40 V52 M1089.5 40 V52 M1093.5 40 V52" stroke="#000" stroke-width="1" fill="none" stroke-dasharray="1 1" shape-rendering="crispEdges"/>
<rect x="1105.5" y="39.5" width="14" height="13" fill="none" stroke="#000" stroke-width="1.3"/>
<path d="M1110.5 40 V52 M1114.5 40 V52" stroke="#000" stroke-width="1" fill="none" stroke-dasharray="1 1" shape-rendering="crispEdges"/>
<rect x="1127" y="37" width="1" height="17" fill="#a0a0a0"/>
<rect x="1128" y="37" width="1" height="17" fill="#ffffff"/>
<rect x="1129" y="36" width="23" height="21" fill="url(#dith)"/>
<rect x="1129" y="36" width="23" height="1" fill="#a0a0a0"/>
<rect x="1129" y="36" width="1" height="21" fill="#a0a0a0"/>
<rect x="1129" y="56" width="23" height="1" fill="#ffffff"/>
<rect x="1151" y="36" width="1" height="21" fill="#ffffff"/>
<rect x="1133.5" y="39.5" width="14" height="13" fill="none" stroke="#000" stroke-width="1.3"/>
<rect x="1134" y="49" width="14" height="1" fill="#000000"/>
<path d="M1160 38 V53 M1155 47.5 H1171" stroke="#000" stroke-width="1" fill="none" stroke-dasharray="2 2" shape-rendering="crispEdges"/>
<path d="M1155 49 L1170 41" stroke="#0000ff" stroke-width="1.2" fill="none" />
<rect x="1177" y="37" width="1" height="17" fill="#a0a0a0"/>
<rect x="1178" y="37" width="1" height="17" fill="#ffffff"/>
<path d="M615.5 64 V80" stroke="#000" stroke-width="1" fill="none" stroke-dasharray="1 1" shape-rendering="crispEdges"/>
<path d="M606 80 Q613 76 617 68 Q619 65 622 64" stroke="#0000ff" stroke-width="1.3" fill="none" />
<path d="M606 71.5 H614" stroke="#000000" stroke-width="1.3" fill="none" />
<path d="M613 69 L616 71.5 L613 74 Z" fill="#000000"/>
<path d="M637.5 64 V80" stroke="#000" stroke-width="1" fill="none" stroke-dasharray="1 1" shape-rendering="crispEdges"/>
<path d="M627 79 H633 Q638 78 643 73" stroke="#0000ff" stroke-width="1.3" fill="none" />
<path d="M634.5 65 V74" stroke="#000000" stroke-width="1.3" fill="none" />
<path d="M632 71 L634.5 75 L637 71 Z" fill="#000000"/>
<path d="M659.5 64 V80 M662.5 64 V80" stroke="#000" stroke-width="1" fill="none" stroke-dasharray="1 1" shape-rendering="crispEdges"/>
<path d="M650 79 H656 Q661 78 667 73" stroke="#0000ff" stroke-width="1.3" fill="none" />
<path d="M656 68 L658.5 72 L661 68 Z M661 68 L663.5 72 L666 68Z" fill="#000000"/>
<path d="M674 66 Q680 66 682 69 Q684 72 690 72 M674 69 Q680 69 682 72 Q684 75 690 75 M674 72 Q680 72 682 75 Q684 78 690 78" stroke="#b0b0b0" stroke-width="1" fill="none" />
<rect x="695" y="64" width="1" height="17" fill="#a0a0a0"/>
<rect x="696" y="64" width="1" height="17" fill="#ffffff"/>
<rect x="701.5" y="64.5" width="15" height="14" fill="#e0e0e0" stroke="#000080" stroke-width="1.3"/>
<path d="M703 73 Q706 69 709 72 L713 69" stroke="#0000ff" stroke-width="1" fill="none" />
<path d="M703 76 H708 Q710 73 714 75" stroke="#f00" stroke-width="1" fill="none" />
<path d="M705 75 L711 67 L715 69 L709 77 Z" fill="#000000"/>
<rect x="723" y="64" width="1" height="17" fill="#a0a0a0"/>
<rect x="724" y="64" width="1" height="17" fill="#ffffff"/>
<rect x="726" y="62" width="23" height="21" fill="url(#dith)"/>
<rect x="726" y="62" width="23" height="1" fill="#a0a0a0"/>
<rect x="726" y="62" width="1" height="21" fill="#a0a0a0"/>
<rect x="726" y="82" width="23" height="1" fill="#ffffff"/>
<rect x="748" y="62" width="1" height="21" fill="#ffffff"/>
<path d="M737.5 64 V80" stroke="#000" stroke-width="1" fill="none" stroke-dasharray="1 1" shape-rendering="crispEdges"/>
<path d="M728 72.5 H746" stroke="#0000ff" stroke-width="1.3" fill="none" />
<rect x="730" y="71" width="3" height="3" fill="#0000ff"/>
<rect x="736" y="71" width="3" height="3" fill="#0000ff"/>
<rect x="742" y="71" width="3" height="3" fill="#0000ff"/>
<path d="M759.5 64 V80" stroke="#000" stroke-width="1" fill="none" stroke-dasharray="1 1" shape-rendering="crispEdges"/>
<path d="M751 72.5 H768" stroke="#0000ff" stroke-width="1.3" fill="none" />
<rect x="752" y="71" width="3" height="3" fill="#0000ff"/>
<rect x="764" y="71" width="3" height="3" fill="#0000ff"/>
<path d="M776 80 Q779 64 783.5 64 Q788 64 791 80" stroke="#0000ff" stroke-width="1.3" fill="none" />
<path d="M798 64 Q801 80 806 80 Q811 80 814 64" stroke="#0000ff" stroke-width="1.3" fill="none" />
<path d="M821 79 Q824 72 826 77 Q830 62 834 68 Q836 74 838 78" stroke="#0000ff" stroke-width="1.3" fill="none" />
<path d="M844 66 Q847 62 849 68 Q853 80 856 74 Q859 66 861 66" stroke="#0000ff" stroke-width="1.3" fill="none" />
<path d="M866 80 L884 64" stroke="#0000ff" stroke-width="1.3" fill="none" />
<path d="M889 78 Q893 64 897 64 Q902 64 906 78 M893 78 Q897 70 902 72" stroke="#0000ff" stroke-width="1.3" fill="none" />
<path d="M912 64 Q916 78 920 78 Q924 78 929 64 M916 64 Q920 72 925 70" stroke="#0000ff" stroke-width="1.3" fill="none" />
<path d="M936 66 Q944 74 953 66 M936 70 Q944 78 953 70 M936 74 Q944 80 953 74" stroke="#0000ff" stroke-width="1.3" fill="none" />
<path d="M958 78 Q966 66 975 78 M958 74 Q966 62 975 74 M960 70 Q966 62 973 70" stroke="#0000ff" stroke-width="1.3" fill="none" />
<path d="M783.5 64 V80" stroke="#000" stroke-width="1" fill="none" stroke-dasharray="1 1" shape-rendering="crispEdges"/>
<path d="M806 64 V80" stroke="#000" stroke-width="1" fill="none" stroke-dasharray="1 1" shape-rendering="crispEdges"/>
<path d="M829 64 V80" stroke="#000" stroke-width="1" fill="none" stroke-dasharray="1 1" shape-rendering="crispEdges"/>
<path d="M852 64 V80" stroke="#000" stroke-width="1" fill="none" stroke-dasharray="1 1" shape-rendering="crispEdges"/>
<path d="M875 64 V80" stroke="#000" stroke-width="1" fill="none" stroke-dasharray="1 1" shape-rendering="crispEdges"/>
<path d="M898 64 V80" stroke="#000" stroke-width="1" fill="none" stroke-dasharray="1 1" shape-rendering="crispEdges"/>
<path d="M921 64 V80" stroke="#000" stroke-width="1" fill="none" stroke-dasharray="1 1" shape-rendering="crispEdges"/>
<path d="M944.5 64 V80" stroke="#000" stroke-width="1" fill="none" stroke-dasharray="1 1" shape-rendering="crispEdges"/>
<path d="M967 64 V80" stroke="#000" stroke-width="1" fill="none" stroke-dasharray="1 1" shape-rendering="crispEdges"/>
<path d="M941 78 L944.5 73 L948 78 Z" fill="#000000"/>
<path d="M963 64 L966.5 69 L970 64 Z" fill="#000000"/>
<rect x="981" y="64" width="1" height="17" fill="#a0a0a0"/>
<rect x="982" y="64" width="1" height="17" fill="#ffffff"/>
<rect x="987.5" y="70.5" width="14" height="9" fill="#ffff00" stroke="#000"/>
<path d="M989 70 L993 66 L1002 66 L1002 70 Z" fill="#5080c0"/>
<rect x="995" y="64" width="5" height="6" fill="#f03030"/>
<rect x="993" y="73" width="3" height="3" fill="#000000"/>
<path d="M1011 71 L1019 71 L1015 75 Z" fill="#000000"/>
<rect x="1025" y="64" width="1" height="17" fill="#a0a0a0"/>
<rect x="1026" y="64" width="1" height="17" fill="#ffffff"/>
<rect x="1030.5" y="64.5" width="15" height="14" fill="#fff" stroke="#000"/>
<path d="M1031 67.5 H1045 M1031 70.5 H1045 M1031 73.5 H1045 M1031 76.5 H1045 M1035.5 65 V78 M1040.5 65 V78" stroke="#000000" stroke-width="1" fill="none" />
<rect x="1052" y="64" width="1" height="17" fill="#a0a0a0"/>
<rect x="1053" y="64" width="1" height="17" fill="#ffffff"/>
<text x="1057" y="79" font-size="17" font-weight="bold" fill="#000" font-family="Liberation Sans">'P'</text>
<rect x="1080" y="64" width="1" height="17" fill="#a0a0a0"/>
<rect x="1081" y="64" width="1" height="17" fill="#ffffff"/>
<rect x="1082" y="62" width="24" height="21" fill="url(#dith)"/>
<rect x="1082" y="62" width="24" height="1" fill="#a0a0a0"/>
<rect x="1082" y="62" width="1" height="21" fill="#a0a0a0"/>
<rect x="1082" y="82" width="24" height="1" fill="#ffffff"/>
<rect x="1105" y="62" width="1" height="21" fill="#ffffff"/>
<rect x="1106" y="62" width="23" height="21" fill="url(#dith)"/>
<rect x="1106" y="62" width="23" height="1" fill="#a0a0a0"/>
<rect x="1106" y="62" width="1" height="21" fill="#a0a0a0"/>
<rect x="1106" y="82" width="23" height="1" fill="#ffffff"/>
<rect x="1128" y="62" width="1" height="21" fill="#ffffff"/>
<path d="M1092.5 70 V79 M1087 79.5 H1098 M1086 73 H1099" stroke="#000000" stroke-width="1.2" fill="none" />
<path d="M1086 73 L1084 77 H1088 Z M1099 73 L1097 77 H1101 Z" stroke="#000000" stroke-width="1" fill="none" />
<path d="M1085 64 L1090 69 M1090 64 L1085 69" stroke="#a00000" stroke-width="1.5" fill="none" />
<path d="M1116.5 70 V79 M1111 79.5 H1122 M1110 73 H1123" stroke="#000000" stroke-width="1.2" fill="none" />
<path d="M1110 73 L1108 77 H1112 Z M1123 73 L1121 77 H1125 Z" stroke="#000000" stroke-width="1" fill="none" />
<path d="M1109 64 L1111.5 67 L1114 64 M1111.5 67 V70" stroke="#a00000" stroke-width="1.5" fill="none" />
<rect x="1131" y="64" width="1" height="17" fill="#a0a0a0"/>
<rect x="1132" y="64" width="1" height="17" fill="#ffffff"/>
<circle cx="1143.5" cy="70.5" r="5.3" fill="#fff" stroke="#000" stroke-width="1.8"/>
<path d="M1147 74 L1152 79" stroke="#000000" stroke-width="2.6" fill="none" />
<path d="M1140.5 70.5 H1146.5" stroke="#000000" stroke-width="2" fill="none" />
<path d="M1143.5 67.5 V73.5" stroke="#000000" stroke-width="2" fill="none" />
<circle cx="1166.5" cy="70.5" r="5.3" fill="#fff" stroke="#000" stroke-width="1.8"/>
<path d="M1170 74 L1175 79" stroke="#000000" stroke-width="2.6" fill="none" />
<path d="M1163.5 70.5 H1169.5" stroke="#000000" stroke-width="2" fill="none" />
<circle cx="1189.5" cy="70.5" r="5.3" fill="#fff" stroke="#000" stroke-width="1.8"/>
<path d="M1193 74 L1198 79" stroke="#000000" stroke-width="2.6" fill="none" />
<rect x="1186.5" y="68.5" width="6" height="4" fill="#f08080" stroke="#c00" stroke-width="1"/>
<rect x="1205" y="64" width="1" height="17" fill="#a0a0a0"/>
<rect x="1206" y="64" width="1" height="17" fill="#ffffff"/>
<circle cx="612" cy="99" r="7" fill="#b8b8b8"/><path d="M607 96 h10 M607 101 h10 M612 92 v14" stroke="#fff" stroke-width="0.8"/>
<text x="627" y="106" font-size="18" font-weight="bold" fill="#000" font-family="Liberation Serif">F</text>
</svg></body></html>
